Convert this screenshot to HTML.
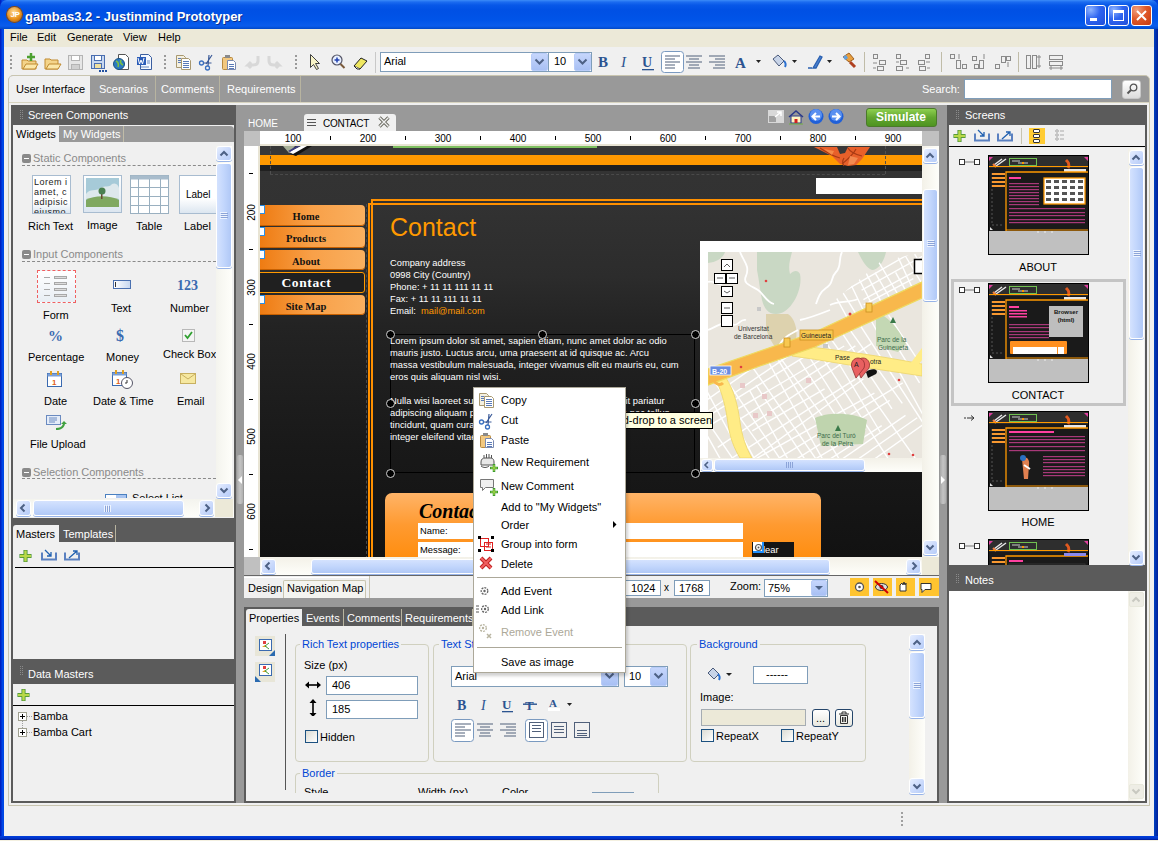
<!DOCTYPE html>
<html><head><meta charset="utf-8">
<style>
*{box-sizing:border-box;margin:0;padding:0}
html,body{width:1158px;height:841px;overflow:hidden;background:#ECE9D8;font-family:"Liberation Sans",sans-serif;font-size:11px;color:#000}
.a{position:absolute}
.t{position:absolute;white-space:nowrap;line-height:13px}
.w{color:#fff}
.mi{left:501px;font-size:11px}
.gb{border:1px solid #D0D0BF;border-radius:4px}
.gt{background:#F0F0F0;color:#0046D5;padding:0 2px}
.inp{background:#fff;border:1px solid #7F9DB9}
.navb{left:258px;width:107px;border-radius:0 4px 4px 0;background:linear-gradient(90deg,#EE7A10,#F8A048 50%,#FAB060);box-shadow:inset 0 -1px 0 #C86000}
.navt{left:260px;width:92px;text-align:center;font-family:"Liberation Serif";font-weight:700;font-size:10.5px;line-height:12px;color:#111}
.evi{left:260px;width:5px;height:9px;background:#fff;border:1px solid #2A90E8;border-left:none}
.yb{width:19px;height:18px;background:#FFC430}
.sbtn{background:linear-gradient(135deg,#E6EEFF 0%,#CCDBFC 50%,#B6CCF8 100%);border:1px solid #fff;border-radius:3px;box-shadow:0 1px 0 #98B4E8}
.sthumb{background:linear-gradient(90deg,#D4E2FE,#C2D6FC 50%,#B0C8F6);border:1px solid #fff;border-radius:3px;box-shadow:0 1px 0 #98B4E8}
.sthumb2{background:linear-gradient(#D4E2FE,#C2D6FC 50%,#B0C8F6);border:1px solid #fff;border-radius:3px;box-shadow:0 1px 0 #98B4E8}
</style></head><body>
<!-- window frame -->
<div class="a" style="left:0;top:0;width:1158px;height:841px;background:linear-gradient(90deg,#0018B8 0px,#0050F0 3px,#0040D8 4px)"></div>
<div class="a" style="left:0;top:0;width:1158px;height:29px;background:linear-gradient(#3C8CF8 0px,#1C6CF0 2px,#0858E8 5px,#0050E4 10px,#0054E8 20px,#0A5CEC 26px,#0048C8 29px);border-radius:7px 7px 0 0"></div>
<div class="a" style="left:1154px;top:29px;width:4px;height:812px;background:linear-gradient(90deg,#0040C0,#001F9A)"></div>
<div class="a" style="left:0;top:836px;width:1158px;height:5px;background:linear-gradient(#0040E0,#0030C0 3px,#001080 4px,#F4F0E0 4px)"></div>
<!-- title -->
<div class="a" style="left:7px;top:7px;width:15px;height:15px;border-radius:50%;background:radial-gradient(circle at 45% 35%,#FFE0A0,#E8901A 55%,#A05000);box-shadow:0 0 0 1px #904A08"></div>
<div class="t" style="left:8px;top:10px;width:14px;text-align:center;font-size:8px;font-weight:700;color:#fff;line-height:9px;letter-spacing:-0.5px">JP</div>
<div class="t w" style="left:25px;top:9px;font-size:13px;font-weight:700;line-height:15px;text-shadow:1px 1px 0 #0A2F8F">gambas3.2 - Justinmind Prototyper</div>
<!-- window buttons -->
<div class="a" style="left:1085px;top:5px;width:21px;height:21px;border:1px solid #fff;border-radius:3px;background:radial-gradient(circle at 25% 20%,#8EB4FF,#2E64F0 45%,#1F4ED8)"></div>
<div class="a" style="left:1090px;top:18px;width:7px;height:3px;background:#fff"></div>
<div class="a" style="left:1108px;top:5px;width:21px;height:21px;border:1px solid #fff;border-radius:3px;background:radial-gradient(circle at 25% 20%,#8EB4FF,#2E64F0 45%,#1F4ED8)"></div>
<div class="a" style="left:1113px;top:10px;width:11px;height:11px;border:1px solid #fff;border-top-width:3px"></div>
<div class="a" style="left:1131px;top:5px;width:21px;height:21px;border:1px solid #fff;border-radius:3px;background:radial-gradient(circle at 25% 20%,#F0A080,#E05A2A 45%,#C83A10)"></div>
<svg class="a" style="left:1136px;top:10px" width="11" height="11"><path d="M1 1L10 10M10 1L1 10" stroke="#fff" stroke-width="2"/></svg>

<!-- menu bar -->
<div class="a" style="left:4px;top:29px;width:1150px;height:18px;background:#ECE9D8"></div>
<div class="t" style="left:10px;top:31px">File</div>
<div class="t" style="left:37px;top:31px">Edit</div>
<div class="t" style="left:67px;top:31px">Generate</div>
<div class="t" style="left:123px;top:31px">View</div>
<div class="t" style="left:158px;top:31px">Help</div>

<!-- toolbar -->
<div class="a" style="left:4px;top:47px;width:1150px;height:759px;background:#F0F0F0"></div>
<svg class="a" style="left:0;top:47px" width="1158" height="28" viewBox="0 47 1158 28">
<g fill="#9A9A9A">
<rect x="10" y="55" width="2" height="2"/><rect x="10" y="59" width="2" height="2"/><rect x="10" y="63" width="2" height="2"/><rect x="10" y="67" width="2" height="2"/>
<rect x="164" y="55" width="2" height="2"/><rect x="164" y="59" width="2" height="2"/><rect x="164" y="63" width="2" height="2"/><rect x="164" y="67" width="2" height="2"/>
<rect x="295" y="55" width="2" height="2"/><rect x="295" y="59" width="2" height="2"/><rect x="295" y="63" width="2" height="2"/><rect x="295" y="67" width="2" height="2"/>
</g>
<!-- new folder -->
<path d="M22 60h5l1 1h8v8h-14z" fill="#F4D48A" stroke="#C08A30"/><path d="M23 69l3-5h12l-3 5z" fill="#FBE7A8" stroke="#C08A30"/>
<path d="M31 53v8M27 57h8" stroke="#4CA030" stroke-width="2.5"/>
<!-- open -->
<path d="M45 59h5l1 1h7v9h-13z" fill="#F4D48A" stroke="#C08A30"/><path d="M46 69l3-5h12l-3 5z" fill="#FBE7A8" stroke="#C08A30"/>
<!-- save disabled -->
<rect x="68.5" y="55.5" width="14" height="14" fill="#E6E6E6" stroke="#B4B4B4"/><rect x="71.5" y="55.5" width="8" height="5" fill="#fff" stroke="#B4B4B4"/><rect x="71.5" y="64.5" width="8" height="5" fill="#D0D0D0" stroke="#B4B4B4"/>
<!-- save as -->
<rect x="91.5" y="55.5" width="13" height="13" fill="#C8D8F0" stroke="#4A6EB0"/><rect x="94.5" y="55.5" width="7" height="5" fill="#fff" stroke="#4A6EB0"/><rect x="94.5" y="63.5" width="7" height="5" fill="#F0E0A0" stroke="#4A6EB0"/>
<rect x="99" y="70" width="2" height="2" fill="#2050A0"/><rect x="102" y="70" width="2" height="2" fill="#2050A0"/><rect x="105" y="70" width="2" height="2" fill="#2050A0"/>
<!-- globe doc -->
<path d="M118.5 54.5h7l3 3v12h-10z" fill="#fff" stroke="#555"/><circle cx="119" cy="64" r="5.5" fill="#2A7AC0" stroke="#184E80"/><path d="M116 61c2 1 3 3 2 6M121 60c-1 2 0 4 2 5" stroke="#7CC040" stroke-width="1.5" fill="none"/>
<!-- word doc -->
<path d="M140.5 54.5h8l3 3v12h-11z" fill="#F4F8FF" stroke="#3A5EA0"/><rect x="137" y="57" width="9" height="8" fill="#2B5CB8"/><path d="M138 58l1.5 6 1.5-4 1.5 4 1.5-6" stroke="#fff" stroke-width="1" fill="none"/><path d="M147 61h3M147 63h3M141 67h8" stroke="#6A8AC0"/>
<!-- copy -->
<path d="M176.5 55.5h7l2 2v10h-9z" fill="#F4F0E0" stroke="#A89870"/><path d="M181.5 58.5h7l2 2v9h-9z" fill="#fff" stroke="#A89870"/><path d="M183 61.5h6M183 63.5h6M183 65.5h6M183 67.5h6M178 58.5h3M178 60.5h3M178 62.5h3" stroke="#5A7AB8"/>
<!-- cut -->
<path d="M212 55l-6 9M209 55l-1 11" stroke="#3A5A98" stroke-width="1.2"/><circle cx="201.5" cy="63" r="2" fill="none" stroke="#3A70C0" stroke-width="1.3"/><circle cx="207.5" cy="68" r="2" fill="none" stroke="#3A70C0" stroke-width="1.3"/><path d="M203.5 63h8" stroke="#3A5A98"/>
<!-- paste -->
<rect x="222.5" y="57.5" width="10" height="12" rx="1" fill="#F2C880" stroke="#B88A40"/><rect x="225" y="55" width="5" height="3" fill="#8A8A8A"/><path d="M227.5 60.5h6l2 2v7h-8z" fill="#fff" stroke="#7A8AB0"/><path d="M229 64.5h5M229 66.5h5M229 68.5h5" stroke="#5A7AB8"/>
<!-- undo redo disabled -->
<path d="M258 56v5c0 3-2 4-5 4h-5l3-3M248 65l3 3" stroke="#D8D8D8" stroke-width="3" fill="none"/>
<path d="M269 56v5c0 3 2 4 5 4h5l-3-3M279 65l-3 3" stroke="#D8D8D8" stroke-width="3" fill="none"/>
<!-- pointer -->
<path d="M310.5 54.5v13l3-3 3 5 2-1-3-5h4z" fill="#F8F4C8" stroke="#404040"/>
<!-- zoom -->
<circle cx="337" cy="60" r="5" fill="#E8F0FF" stroke="#556" stroke-width="1.2"/><path d="M337 57.5v5M334.5 60h5" stroke="#2040B0" stroke-width="1.5"/><path d="M340.5 64l4 4" stroke="#7A5A3A" stroke-width="2"/>
<!-- eraser -->
<path d="M354 66l7-8 6 3-7 8z" fill="#F0E860" stroke="#222"/><path d="M354 66l3 3 3 0" fill="#fff" stroke="#222"/>
<rect x="375" y="52" width="1" height="21" fill="#C8C8C8"/>
<!-- B I U -->
<text x="598" y="67" font-family="Liberation Serif" font-weight="700" font-size="15" fill="#2C5490">B</text>
<text x="621" y="67" font-family="Liberation Serif" font-style="italic" font-size="15" fill="#2C5490">I</text>
<text x="642" y="67" font-family="Liberation Serif" font-weight="700" font-size="14" fill="#2C5490">U</text><rect x="642" y="69" width="12" height="1.3" fill="#2C5490"/>
<rect x="661.5" y="51.5" width="22" height="21" rx="3" fill="#fff" stroke="#7A9AC0"/>
<g stroke="#50607A" stroke-width="1.2">
<path d="M665 56h15M665 59h10M665 62h15M665 65h10M665 68h10"/>
<path d="M686 56h16M689 59h10M686 62h16M689 65h10M688 68h12"/>
<path d="M709 56h16M715 59h10M709 62h16M715 65h10M713 68h12"/>
</g>
<text x="735" y="68" font-family="Liberation Serif" font-weight="700" font-size="15" fill="#2C5490">A</text>
<path d="M756 60h5l-2.5 3z" fill="#222"/>
<!-- bucket -->
<path d="M773 59l5-4 6 6-5 5z" fill="#C8D4E8" stroke="#4A5A7A"/><path d="M784 61c2 2 2 4 1 6" stroke="#2A70D0" stroke-width="2" fill="none"/>
<path d="M792 60h5l-2.5 3z" fill="#222"/>
<!-- pen -->
<path d="M808 68h4M813 68l7-12 2 1-6 11z" stroke="#2A60B0" stroke-width="1.3" fill="#4A80D0"/>
<path d="M827 60h5l-2.5 3z" fill="#222"/>
<!-- brush -->
<path d="M843 57l6-4 5 6-5 3z" fill="#E8A040" stroke="#A06020"/><path d="M843 57l3-2 2 3-3 2z" fill="#60A0E0"/><path d="M850 62l5 5" stroke="#B04020" stroke-width="3"/>
<rect x="864" y="52" width="1" height="20" fill="#C0BCA8"/>
<rect x="941" y="52" width="1" height="20" fill="#C0BCA8"/>
<rect x="1018" y="52" width="1" height="20" fill="#C0BCA8"/>
<g fill="none" stroke="#8A8A8A">
<rect x="873.5" y="54.5" width="4" height="4"/><rect x="879.5" y="60.5" width="6" height="4"/><rect x="877.5" y="66.5" width="6" height="4"/><path d="M873 63h4M873 68h3"/>
<rect x="896.5" y="54.5" width="4" height="4"/><rect x="900.5" y="60.5" width="6" height="4"/><rect x="896.5" y="66.5" width="6" height="4"/><path d="M896 62h3M906 68h3"/>
<rect x="925.5" y="54.5" width="4" height="4"/><rect x="918.5" y="60.5" width="6" height="4"/><rect x="919.5" y="66.5" width="6" height="4"/><path d="M926 62h4M927 68h3"/>
<rect x="950.5" y="54.5" width="4" height="4"/><rect x="956.5" y="60.5" width="4" height="8"/><rect x="962.5" y="64.5" width="4" height="4"/><path d="M959 54v5"/>
<rect x="972.5" y="56.5" width="4" height="4"/><rect x="979.5" y="60.5" width="4" height="8"/><rect x="974.5" y="64.5" width="4" height="4"/><path d="M984 54v5"/>
<rect x="995.5" y="64.5" width="4" height="4"/><rect x="1001.5" y="56.5" width="4" height="6"/><rect x="1006.5" y="56.5" width="4" height="4"/><path d="M1008 62v5"/>
<rect x="1026.5" y="55.5" width="4" height="13"/><rect x="1032.5" y="55.5" width="4" height="13"/><path d="M1039 55v13M1037 57h4M1037 66h4"/>
<rect x="1049.5" y="55.5" width="13" height="4"/><rect x="1049.5" y="61.5" width="13" height="4"/><path d="M1049 68h14M1051 66v4M1061 66v4"/>
</g>
</svg>
<!-- font combo -->
<div class="a" style="left:380px;top:52px;width:169px;height:20px;background:#fff;border:1px solid #7F9DB9"></div>
<div class="t" style="left:384px;top:55px">Arial</div>
<div class="a" style="left:531px;top:53px;width:17px;height:18px;background:linear-gradient(#C6D6FC,#A8C0F4);border:1px solid #B8CCF8;border-radius:2px"></div>
<svg class="a" style="left:534px;top:58px" width="11" height="8"><path d="M1.5 1.5l4 4 4-4" stroke="#4D6185" stroke-width="2" fill="none"/></svg>
<div class="a" style="left:548px;top:52px;width:44px;height:20px;background:#fff;border:1px solid #7F9DB9"></div>
<div class="t" style="left:554px;top:55px">10</div>
<div class="a" style="left:574px;top:53px;width:17px;height:18px;background:linear-gradient(#C6D6FC,#A8C0F4);border:1px solid #B8CCF8;border-radius:2px"></div>
<svg class="a" style="left:577px;top:58px" width="11" height="8"><path d="M1.5 1.5l4 4 4-4" stroke="#4D6185" stroke-width="2" fill="none"/></svg>


<!-- main tab row -->
<div class="a" style="left:8px;top:75px;width:1142px;height:731px;border:1px solid #C9C5B0;border-radius:5px 5px 0 0;background:#999"></div>
<div class="a" style="left:9px;top:76px;width:81px;height:26px;background:#F0F0F0;border-radius:4px 0 0 0"></div>
<div class="t" style="left:16px;top:83px">User Interface</div>
<div class="t w" style="left:99px;top:83px">Scenarios</div>
<div class="a" style="left:155px;top:76px;width:1px;height:26px;background:#B8B4A0"></div>
<div class="t w" style="left:161px;top:83px">Comments</div>
<div class="a" style="left:219px;top:76px;width:1px;height:26px;background:#B8B4A0"></div>
<div class="t w" style="left:227px;top:83px">Requirements</div>
<div class="a" style="left:300px;top:76px;width:1px;height:26px;background:#B8B4A0"></div>
<div class="t w" style="left:922px;top:83px">Search:</div>
<div class="a" style="left:964px;top:79px;width:148px;height:20px;background:#fff;border:1px solid #7F9DB9"></div>
<div class="a" style="left:1122px;top:80px;width:19px;height:19px;background:linear-gradient(#fff,#DCDCDC);border:1px solid #C8C8C8;border-radius:3px"></div>
<svg class="a" style="left:1126px;top:83px" width="12" height="12"><circle cx="7.5" cy="4.5" r="3.3" fill="none" stroke="#555" stroke-width="1.3"/><path d="M5 7L1.5 10.5" stroke="#555" stroke-width="2"/></svg>
<div class="a" style="left:9px;top:102px;width:1140px;height:703px;background:#F0F0F0"></div>
<div class="a" style="left:9px;top:102px;width:1140px;height:1px;background:#D8D4C0"></div><div class="a" style="left:11px;top:105px;width:1136px;height:698px;background:#999"></div>

<!-- LEFT PANEL -->
<div class="a" style="left:11px;top:105px;width:225px;height:698px;background:#5B5B5B"></div>
<div class="a" style="left:13px;top:125px;width:221px;height:393px;background:#F0F0F0"></div>
<svg class="a" style="left:20px;top:110px" width="5" height="11"><g fill="#8A8A8A"><rect x="0" y="0" width="1" height="1"/><rect x="2" y="0" width="1" height="1"/><rect x="0" y="2" width="1" height="1"/><rect x="2" y="2" width="1" height="1"/><rect x="0" y="4" width="1" height="1"/><rect x="2" y="4" width="1" height="1"/><rect x="0" y="6" width="1" height="1"/><rect x="2" y="6" width="1" height="1"/><rect x="0" y="8" width="1" height="1"/><rect x="2" y="8" width="1" height="1"/></g></svg>
<div class="t w" style="left:28px;top:109px">Screen Components</div>
<!-- widgets tabs -->
<div class="a" style="left:13px;top:126px;width:221px;height:16px;background:#999;border-radius:0 4px 0 0"></div>
<div class="a" style="left:13px;top:126px;width:46px;height:17px;background:#F0F0F0"></div>
<div class="t" style="left:16px;top:128px">Widgets</div>
<div class="t w" style="left:63px;top:128px">My Widgets</div>
<div class="a" style="left:123px;top:126px;width:1px;height:16px;background:#C0BCA8"></div>
<!-- static components -->
<div class="a" style="left:22px;top:154px;width:9px;height:9px;background:#8A8A8A;border-radius:2px"></div>
<div class="a" style="left:24px;top:158px;width:5px;height:1px;background:#fff"></div>
<div class="t" style="left:33px;top:152px;color:#8A8A8A">Static Components</div>
<div class="a" style="left:22px;top:165px;width:194px;height:0;border-top:1px dashed #8A8A8A"></div>
<!-- rich text thumb -->
<div class="a" style="left:32px;top:175px;width:39px;height:39px;border:1px solid #A8BCD0;background:linear-gradient(#fff 70%,#DCE6F0);overflow:hidden"></div>
<div class="a" style="left:34px;top:177px;width:36px;height:36px;overflow:hidden;font-size:9px;line-height:10px;letter-spacing:0.5px;color:#222;white-space:nowrap">Lorem i<br>amet, c<br>adipisic<br>eiusmo</div>
<div class="t" style="left:28px;top:220px">Rich Text</div>
<!-- image thumb -->
<div class="a" style="left:83px;top:175px;width:39px;height:38px;border:1px solid #A8BCD0;background:linear-gradient(#fff,#DCE6F0)"></div>
<svg class="a" style="left:86px;top:178px" width="33" height="32"><rect x="0" y="0" width="33" height="29" fill="#A6CAD8"/><path d="M0 16c4-6 10-2 14-6 5-3 9 0 12-4 4-2 7 2 7 4v11H0z" fill="#DDE8EC"/><path d="M0 22c8-5 24-5 33 0v7H0z" fill="#7FA860"/><rect x="15" y="14" width="1.5" height="7" fill="#6A4A30"/><circle cx="16" cy="13" r="3.5" fill="#4A8050"/></svg>
<div class="t" style="left:87px;top:219px">Image</div>
<!-- table thumb -->
<svg class="a" style="left:130px;top:175px" width="40" height="40"><rect x="0.5" y="0.5" width="38" height="38" fill="#fff" stroke="#9AB0C0"/><rect x="0.5" y="0.5" width="38" height="4" fill="#A8BCCC"/><g stroke="#9AB0C0"><path d="M8.5 4v35M19.5 4v35M30.5 4v35M0 12.5h39M0 21.5h39M0 30.5h39"/></g></svg>
<div class="t" style="left:136px;top:220px">Table</div>
<!-- label thumb -->
<div class="a" style="left:179px;top:175px;width:37px;height:39px;border:1px solid #A8BCD0;border-right:none;background:linear-gradient(#fff 60%,#DCE6F0)"></div>
<div class="t" style="left:186px;top:188px;font-size:10px">Label</div>
<div class="t" style="left:184px;top:220px">Label</div>
<!-- input components -->
<div class="a" style="left:22px;top:250px;width:9px;height:9px;background:#8A8A8A;border-radius:2px"></div>
<div class="a" style="left:24px;top:254px;width:5px;height:1px;background:#fff"></div>
<div class="t" style="left:33px;top:248px;color:#8A8A8A">Input Components</div>
<div class="a" style="left:22px;top:261px;width:194px;height:0;border-top:1px dashed #8A8A8A"></div>
<!-- form -->
<div class="a" style="left:37px;top:270px;width:39px;height:33px;border:1px dashed #F06060;background:linear-gradient(#fff,#E8EEF4)"></div>
<svg class="a" style="left:42px;top:275px" width="30" height="24"><g stroke="#A8A8A8"><path d="M2 2.5h6M2 8.5h6M2 14.5h6M2 20.5h6"/><rect x="12.5" y="1.5" width="12" height="2" fill="#DDD"/><rect x="12.5" y="7.5" width="12" height="2" fill="#DDD"/><rect x="12.5" y="13.5" width="12" height="2" fill="#DDD"/><rect x="12.5" y="19.5" width="12" height="2" fill="#DDD"/></g></svg>
<div class="t" style="left:43px;top:309px">Form</div>
<!-- text -->
<div class="a" style="left:113px;top:280px;width:18px;height:9px;border:1px solid #4A70B0;background:linear-gradient(90deg,#fff,#C8D8F0)"></div>
<div class="a" style="left:115px;top:282px;width:1px;height:5px;background:#333"></div>
<div class="t" style="left:111px;top:302px">Text</div>
<!-- number -->
<div class="t" style="left:177px;top:279px;font-family:'Liberation Serif';font-weight:700;font-size:14px;color:#3A6AB0;letter-spacing:0px">123</div>
<div class="t" style="left:170px;top:302px">Number</div>
<!-- percentage -->
<div class="t" style="left:48px;top:330px;font-family:'Liberation Serif';font-weight:700;font-size:15px;color:#3A6AB0">%</div>
<div class="t" style="left:28px;top:351px">Percentage</div>
<div class="t" style="left:116px;top:329px;font-family:'Liberation Serif';font-weight:700;font-size:16px;color:#3A6AB0">$</div>
<div class="t" style="left:106px;top:351px">Money</div>
<svg class="a" style="left:182px;top:329px" width="14" height="14"><rect x="0.5" y="0.5" width="12" height="12" fill="#F4F4F4" stroke="#B8B8B8"/><path d="M3 6l2.5 3 4.5-6" stroke="#30A030" stroke-width="1.8" fill="none"/></svg>
<div class="t" style="left:163px;top:348px">Check Box</div>
<!-- date -->
<svg class="a" style="left:47px;top:371px" width="16" height="17"><rect x="0.5" y="2.5" width="14" height="13" fill="#fff" stroke="#3A6AB0"/><rect x="0.5" y="2.5" width="14" height="3" fill="#7AA0D8"/><rect x="3" y="0" width="2" height="4" fill="#E0A020"/><rect x="10" y="0" width="2" height="4" fill="#E0A020"/><text x="5" y="14" font-size="8" font-weight="700" fill="#E06020" font-family="Liberation Sans">1</text></svg>
<div class="t" style="left:44px;top:395px">Date</div>
<svg class="a" style="left:112px;top:370px" width="22" height="20"><rect x="0.5" y="2.5" width="14" height="13" fill="#fff" stroke="#3A6AB0"/><rect x="0.5" y="2.5" width="14" height="3" fill="#7AA0D8"/><rect x="3" y="0" width="2" height="4" fill="#E0A020"/><rect x="10" y="0" width="2" height="4" fill="#E0A020"/><text x="4" y="14" font-size="8" font-weight="700" fill="#E06020" font-family="Liberation Sans">1</text><circle cx="15" cy="13" r="5.5" fill="#fff" stroke="#556"/><path d="M15 10v3h-2" stroke="#333" fill="none"/></svg>
<div class="t" style="left:93px;top:395px">Date &amp; Time</div>
<svg class="a" style="left:180px;top:373px" width="17" height="12"><rect x="0.5" y="0.5" width="15" height="10" fill="#F6E8A0" stroke="#C8B060"/><path d="M1 1l7 5 7-5" stroke="#C8B060" fill="none"/></svg>
<div class="t" style="left:177px;top:395px">Email</div>
<!-- file upload -->
<svg class="a" style="left:46px;top:415px" width="22" height="16"><rect x="0.5" y="0.5" width="14" height="9" fill="#E4ECF8" stroke="#6A8AC0"/><path d="M3 3h8M3 5h8M3 7h6" stroke="#6A8AC0"/><path d="M10 13c3 0 6-1 7-4l-2 0 3-3 3 3h-2c-1 4-4 6-9 6z" fill="#40A040"/></svg>
<div class="t" style="left:30px;top:438px">File Upload</div>
<!-- selection components -->
<div class="a" style="left:22px;top:468px;width:9px;height:9px;background:#8A8A8A;border-radius:2px"></div>
<div class="a" style="left:24px;top:472px;width:5px;height:1px;background:#fff"></div>
<div class="t" style="left:33px;top:466px;color:#8A8A8A">Selection Components</div>
<div class="a" style="left:22px;top:478px;width:194px;height:0;border-top:1px dashed #8A8A8A"></div>
<div class="a" style="left:105px;top:494px;width:22px;height:6px;border:1px solid #4A80C0;border-bottom:none;background:linear-gradient(90deg,#fff 50%,#A8C4F0 50%)"></div>
<div class="t" style="left:132px;top:492px;height:6px;overflow:hidden;line-height:13px">Select List</div>
<div class="a" style="left:13px;top:498px;width:203px;height:20px;background:#F0F0F0"></div>
<!-- vertical scrollbar -->
<div class="a" style="left:216px;top:146px;width:16px;height:352px;background:linear-gradient(90deg,#F4F4EE,#FEFEFA)"></div>
<div class="a sbtn" style="left:216px;top:146px;width:16px;height:15px"></div>
<svg class="a" style="left:219px;top:150px" width="10" height="7"><path d="M1.5 5.5l3.5-3.5 3.5 3.5" stroke="#4D6185" stroke-width="2" fill="none"/></svg>
<div class="a sthumb" style="left:216px;top:163px;width:16px;height:105px"></div>
<svg class="a" style="left:220px;top:212px" width="8" height="7"><path d="M0 .5h7M0 2.5h7M0 4.5h7M0 6.5h7" stroke="#EEF4FE"/><path d="M1 1.5h7M1 3.5h7M1 5.5h7" stroke="#8CA4D8"/></svg>
<div class="a sbtn" style="left:216px;top:483px;width:16px;height:15px"></div>
<svg class="a" style="left:219px;top:487px" width="10" height="7"><path d="M1.5 1.5l3.5 3.5 3.5-3.5" stroke="#4D6185" stroke-width="2" fill="none"/></svg>
<!-- horizontal scrollbar -->
<div class="a" style="left:13px;top:499px;width:221px;height:18px;background:linear-gradient(#F4F4EE,#FEFEFA)"></div>
<div class="a sbtn" style="left:16px;top:500px;width:15px;height:16px"></div>
<svg class="a" style="left:19px;top:503px" width="8" height="10"><path d="M5.5 1.5l-3.5 3.5 3.5 3.5" stroke="#4D6185" stroke-width="2" fill="none"/></svg>
<div class="a sthumb2" style="left:33px;top:500px;width:151px;height:16px"></div>
<svg class="a" style="left:104px;top:505px" width="8" height="7"><path d="M.5 0v7M2.5 0v7M4.5 0v7M6.5 0v7" stroke="#EEF4FE"/><path d="M1.5 1v7M3.5 1v7M5.5 1v7" stroke="#8CA4D8"/></svg>
<div class="a" style="left:215px;top:499px;width:18px;height:18px;background:#ECE9D8"></div>
<div class="a sbtn" style="left:199px;top:500px;width:15px;height:16px"></div>
<svg class="a" style="left:203px;top:503px" width="8" height="10"><path d="M2.5 1.5l3.5 3.5-3.5 3.5" stroke="#4D6185" stroke-width="2" fill="none"/></svg>
<!-- masters -->
<div class="a" style="left:13px;top:525px;width:46px;height:18px;background:#F0F0F0;border-radius:3px 0 0 0"></div>
<div class="t" style="left:16px;top:528px">Masters</div>
<div class="t w" style="left:63px;top:528px">Templates</div>
<div class="a" style="left:115px;top:525px;width:1px;height:17px;background:#B8B4A0"></div>
<div class="a" style="left:13px;top:542px;width:221px;height:117px;background:#F0F0F0"></div>
<svg class="a" style="left:19px;top:549px" width="62" height="15">
<path d="M6.5 1v12M0.5 7h12" stroke="#3A8A30" stroke-width="4"/><path d="M6.5 1.5v11M1 7h11" stroke="#B8D848" stroke-width="2.5"/>
<path d="M23 3.5v7h14v-7" stroke="#5A80C0" stroke-width="2" fill="none"/><path d="M26 1l6 6M32 3v4h-4" stroke="#2060B0" stroke-width="1.3" fill="none"/>
<path d="M46 3.5v7h14v-7" stroke="#5A80C0" stroke-width="2" fill="none"/><path d="M50 9l8-7M54 2h4v4" stroke="#2060B0" stroke-width="1.3" fill="none"/>
</svg>
<div class="a" style="left:15px;top:567px;width:219px;height:1px;background:#000"></div>
<!-- data masters -->
<svg class="a" style="left:20px;top:666px" width="5" height="11"><g fill="#8A8A8A"><rect x="0" y="0" width="1" height="1"/><rect x="2" y="0" width="1" height="1"/><rect x="0" y="2" width="1" height="1"/><rect x="2" y="2" width="1" height="1"/><rect x="0" y="4" width="1" height="1"/><rect x="2" y="4" width="1" height="1"/><rect x="0" y="6" width="1" height="1"/><rect x="2" y="6" width="1" height="1"/><rect x="0" y="8" width="1" height="1"/><rect x="2" y="8" width="1" height="1"/></g></svg>
<div class="t w" style="left:28px;top:668px">Data Masters</div>
<div class="a" style="left:13px;top:684px;width:221px;height:117px;background:#F0F0F0"></div>
<svg class="a" style="left:17px;top:688px" width="14" height="14"><path d="M6.5 1v12M0.5 7h12" stroke="#3A8A30" stroke-width="4"/><path d="M6.5 1.5v11M1 7h11" stroke="#B8D848" stroke-width="2.5"/></svg>
<div class="a" style="left:13px;top:705px;width:221px;height:1px;background:#000"></div>
<svg class="a" style="left:18px;top:712px" width="16" height="28"><rect x="0.5" y="0.5" width="8" height="8" fill="#fff" stroke="#A0A090"/><path d="M2 4.5h5M4.5 2v5" stroke="#000"/><rect x="0.5" y="16.5" width="8" height="8" fill="#fff" stroke="#A0A090"/><path d="M2 20.5h5M4.5 18v5" stroke="#000"/><path d="M9 4.5h6M9 20.5h6M4.5 9v7" stroke="#A0A0A0" stroke-dasharray="1 1"/></svg>
<div class="t" style="left:33px;top:710px">Bamba</div>
<div class="t" style="left:33px;top:726px">Bamba Cart</div>

<!-- CENTER -->
<div class="t w" style="left:248px;top:117px;font-size:10px">HOME</div>
<div class="a" style="left:304px;top:114px;width:92px;height:18px;background:#F0F0F0;border-radius:3px 3px 0 0"></div>
<svg class="a" style="left:307px;top:119px" width="10" height="7"><path d="M0 .5h9M0 3.5h9M0 6.5h9" stroke="#555"/></svg>
<div class="t" style="left:323px;top:117px;font-size:10px;letter-spacing:-0.2px">CONTACT</div>
<svg class="a" style="left:378px;top:116px" width="12" height="12"><path d="M1.5 1.5l9 9M10.5 1.5l-9 9" stroke="#6A6A60" stroke-width="3.2"/><path d="M1.5 1.5l9 9M10.5 1.5l-9 9" stroke="#F0F0F0" stroke-width="1.4"/></svg>
<!-- canvas icons -->
<svg class="a" style="left:766px;top:107px" width="80" height="20">
<rect x="2" y="3" width="16" height="13" fill="#D8D8D8"/><rect x="3" y="9" width="7" height="6" fill="#A0A0A0"/><path d="M9 10l6-5M11 5h4v4" stroke="#fff" stroke-width="1.5" fill="none"/>
<path d="M23 10l7-6 7 6" fill="none" stroke="#2A3A8A" stroke-width="1.5"/><rect x="25" y="9" width="10" height="7" fill="#FFF4C0" stroke="#2A3A8A"/><rect x="28.5" y="12" width="3" height="4" fill="#D02020"/><path d="M23 17h14" stroke="#70B040"/>
<circle cx="50" cy="9.5" r="7.5" fill="#2060D8"/><circle cx="50" cy="8" r="6" fill="#5A90F0"/><path d="M54 9.5h-7M50 6l-3.5 3.5 3.5 3.5" stroke="#fff" stroke-width="2" fill="none"/>
<circle cx="70" cy="9.5" r="7.5" fill="#2060D8"/><circle cx="70" cy="8" r="6" fill="#5A90F0"/><path d="M66 9.5h7M70 6l3.5 3.5-3.5 3.5" stroke="#fff" stroke-width="2" fill="none"/>
</svg>
<div class="a" style="left:866px;top:108px;width:71px;height:19px;border-radius:3px;background:linear-gradient(#8ED050,#62A630 50%,#4E9420);border:1px solid #4A7A2A"></div>
<div class="t w" style="left:876px;top:110px;font-size:12px;font-weight:700;line-height:14px">Simulate</div>
<!-- rulers -->
<div class="a" style="left:244px;top:131px;width:16px;height:15px;background:#C0C0C0"></div>
<div class="a" style="left:260px;top:131px;width:662px;height:15px;background:#fff;border-bottom:2px solid #E8E4D4"></div>
<div class="a" style="left:922px;top:131px;width:17px;height:15px;background:#C0C0C0"></div>
<div class="a" style="left:244px;top:146px;width:16px;height:411px;background:#fff;border-right:2px solid #E8E4D4"></div>
<div class="t" style="left:273px;top:132px;width:40px;text-align:center;font-size:10px">100</div>
<div class="a" style="left:330px;top:136px;width:1px;height:4px;background:#000"></div>
<div class="t" style="left:348px;top:132px;width:40px;text-align:center;font-size:10px">200</div>
<div class="a" style="left:405px;top:136px;width:1px;height:4px;background:#000"></div>
<div class="t" style="left:423px;top:132px;width:40px;text-align:center;font-size:10px">300</div>
<div class="a" style="left:480px;top:136px;width:1px;height:4px;background:#000"></div>
<div class="t" style="left:498px;top:132px;width:40px;text-align:center;font-size:10px">400</div>
<div class="a" style="left:555px;top:136px;width:1px;height:4px;background:#000"></div>
<div class="t" style="left:573px;top:132px;width:40px;text-align:center;font-size:10px">500</div>
<div class="a" style="left:630px;top:136px;width:1px;height:4px;background:#000"></div>
<div class="t" style="left:648px;top:132px;width:40px;text-align:center;font-size:10px">600</div>
<div class="a" style="left:705px;top:136px;width:1px;height:4px;background:#000"></div>
<div class="t" style="left:723px;top:132px;width:40px;text-align:center;font-size:10px">700</div>
<div class="a" style="left:780px;top:136px;width:1px;height:4px;background:#000"></div>
<div class="t" style="left:798px;top:132px;width:40px;text-align:center;font-size:10px">800</div>
<div class="a" style="left:855px;top:136px;width:1px;height:4px;background:#000"></div>
<div class="t" style="left:873px;top:132px;width:40px;text-align:center;font-size:10px">900</div>

<div class="a" style="left:249px;top:173px;width:4px;height:1px;background:#000"></div>
<div class="a" style="left:249px;top:249px;width:4px;height:1px;background:#000"></div>
<div class="a" style="left:249px;top:324px;width:4px;height:1px;background:#000"></div>
<div class="a" style="left:249px;top:399px;width:4px;height:1px;background:#000"></div>
<div class="a" style="left:249px;top:474px;width:4px;height:1px;background:#000"></div>
<div class="a" style="left:249px;top:549px;width:4px;height:1px;background:#000"></div>
<div class="t" style="left:231px;top:206px;width:40px;text-align:center;font-size:10px;transform:rotate(-90deg)">200</div>
<div class="t" style="left:231px;top:281px;width:40px;text-align:center;font-size:10px;transform:rotate(-90deg)">300</div>
<div class="t" style="left:231px;top:355px;width:40px;text-align:center;font-size:10px;transform:rotate(-90deg)">400</div>
<div class="t" style="left:231px;top:430px;width:40px;text-align:center;font-size:10px;transform:rotate(-90deg)">500</div>
<div class="t" style="left:231px;top:505px;width:40px;text-align:center;font-size:10px;transform:rotate(-90deg)">600</div>

<!-- CANVAS -->
<div class="a" style="left:260px;top:146px;width:662px;height:411px;overflow:hidden">
<div class="a" style="left:-260px;top:-146px;width:1158px;height:841px">
<div class="a" style="left:260px;top:146px;width:662px;height:411px;background:linear-gradient(#343434 0px,#323232 60px,#2C2C2C 130px,#232323 180px,#191919 300px,#121212 411px)"></div>
<div class="a" style="left:260px;top:146px;width:662px;height:9px;background:#383838"></div>
<div class="a" style="left:393px;top:146px;width:204px;height:2px;background:#7EC060"></div>
<div class="a" style="left:260px;top:155px;width:662px;height:10px;background:#FF9900"></div>
<div class="a" style="left:260px;top:165px;width:662px;height:6px;background:#202020"></div>
<div class="a" style="left:270px;top:174px;width:615px;height:0;border-top:1px dashed #4A4A4A"></div>
<div class="a" style="left:270px;top:146px;width:0;height:28px;border-left:1px dashed #505050"></div>
<div class="a" style="left:885px;top:146px;width:0;height:28px;border-left:1px dashed #505050"></div>
<svg class="a" style="left:280px;top:146px" width="36" height="14"><path d="M3 0h12l-6 7z" fill="#A8B098"/><path d="M10 8l14-8h8l-16 10z" fill="#111"/><path d="M9 6l12-6h6l-14 8z" fill="#fff"/><path d="M8 5l9-5h3l-10 6z" fill="#3A3A80"/></svg>
<svg class="a" style="left:812px;top:146px" width="60" height="21"><path d="M2 1h56l-8 12-6 6-8 1-8-2-8-8z" fill="#E8602A"/><path d="M25 1h11l-3 6-5 1z" fill="#383838"/><path d="M8 2c6 4 12 8 20 10M44 3c-3 6-8 10-14 15M36 2c2 4 6 6 14 8M32 12c-2 3-2 5 0 8" stroke="#A83A14" stroke-width="1.2" fill="none"/><path d="M38 10l8 2-4 6-6 1z" fill="#F38A50"/><path d="M12 3l10 2-2 4z" fill="#F58A48"/></svg>
<div class="a" style="left:816px;top:178px;width:120px;height:16px;background:#fff"></div>
<!-- nav buttons -->
<div class="a navb" style="left:258px;top:205px;height:21px"></div>
<div class="a navb" style="left:258px;top:227px;height:21px"></div>
<div class="a navb" style="left:258px;top:250px;height:20px"></div>
<div class="a" style="left:256px;top:272px;width:109px;height:21px;background:#202020;border:1px solid #FF9900;border-radius:3px"></div>
<div class="a navb" style="left:258px;top:295px;height:20px"></div>
<div class="t navt" style="top:211px">Home</div>
<div class="t navt" style="top:233px">Products</div>
<div class="t navt" style="top:256px">About</div>
<div class="t" style="left:260px;top:275px;width:93px;text-align:center;font-family:'Liberation Serif';font-weight:700;font-size:13.5px;line-height:15px;letter-spacing:0.6px;color:#fff">Contact</div>
<div class="t navt" style="top:301px">Site Map</div>
<div class="a evi" style="top:205px"></div><div class="a evi" style="top:227px"></div><div class="a evi" style="top:250px"></div><div class="a evi" style="top:295px"></div>
<div class="a" style="left:366px;top:204px;width:0;height:360px;border-left:1px dashed #4A4A4A"></div>
<!-- content frame -->
<div class="a" style="left:371px;top:199px;width:600px;height:400px;border:2px solid #FF9000;border-right:none;border-bottom:none"></div>
<div class="a" style="left:368px;top:203px;width:600px;height:400px;border:2px solid #FF9000;border-right:none;border-bottom:none"></div>
<div class="t" style="left:390px;top:213px;font-size:25px;line-height:28px;color:#FF9900">Contact</div>
<div class="a" style="left:390px;top:257px;font-size:9.3px;line-height:12px;color:#fff;white-space:nowrap">Company address<br>0998 City (Country)<br>Phone: + 11 11 111 11 11<br>Fax: + 11 11 111 11 11<br>Email: &nbsp;<span style="color:#FF9900">mail@mail.com</span></div>
<!-- lorem -->
<div class="a" style="left:390px;top:334px;width:305px;height:139px;border:1px solid #000;border-top-color:#000"></div>
<div class="a" style="left:390px;top:335px;font-size:9.4px;line-height:12px;color:#fff;white-space:nowrap">Lorem ipsum dolor sit amet, sapien etiam, nunc amet dolor ac odio<br>mauris justo. Luctus arcu, uma praesent at id quisque ac. Arcu<br>massa vestibulum malesuada, integer vivamus elit eu mauris eu, cum<br>eros quis aliquam nisl wisi.<br><br>Nulla wisi laoreet suspendisse vivamus elit eu mauris velit pariatur<br>adipiscing aliquam pede, nunc amet dolor ac odio magna nec tellus<br>tincidunt, quam curabitur, velit et nunc, amet dolor<br>integer eleifend vitae, magna arcu</div>
<!-- map -->
<div class="a" style="left:700px;top:241px;width:230px;height:231px;background:#fff"></div>
<svg class="a" style="left:708px;top:252px" width="214" height="206" viewBox="708 252 214 206">
<defs><clipPath id="cl1"><path d="M708 382L760 364L815 345L922 296V458H708z"/></clipPath><clipPath id="cl2"><path d="M835 300L880 262L922 252V290L840 322z"/></clipPath></defs>
<rect x="708" y="252" width="214" height="206" fill="#EAE6DE"/>
<path d="M708 252h17c-2 6-8 10-17 11z" fill="#C9D8C4"/>
<path d="M757 252h35c-2 8-4 14-2 22 4-4 8-4 10 0 2 10-2 22-8 30-4 6-10 10-16 10-8 0-12-6-14-14-2-10-3-20-5-30z" fill="#C9D8C4"/>
<path d="M858 252h28c-2 10-8 18-14 18-6-2-10-10-14-18z" fill="#C9D8C4"/>
<path d="M766 314h22c6 4 10 14 8 26l-18 10c-6-6-10-14-12-22z" fill="#DDD2AE"/>
<g stroke="#fff" stroke-width="1.4" fill="none" clip-path="url(#cl1)"><path d="M672.9 355.9L762.6 296.7"/><path d="M634.6 388.6L799.4 286.7"/><path d="M644.7 402.5L772.9 310.4"/><path d="M650.5 403.6L789.0 315.0"/><path d="M686.5 389.3L807.2 316.8"/><path d="M708.9 380.4L804.3 329.3"/><path d="M678.8 419.4L841.8 305.9"/><path d="M706.9 412.0L816.9 336.3"/><path d="M667.5 441.0L810.8 352.8"/><path d="M690.2 436.9L844.2 346.0"/><path d="M730.4 425.1L855.4 345.9"/><path d="M717.7 447.4L871.3 343.6"/><path d="M752.3 430.8L824.6 388.8"/><path d="M700.1 478.5L855.3 379.1"/><path d="M749.7 460.6L863.4 379.0"/><path d="M745.4 464.6L874.4 393.1"/><path d="M762.0 468.5L902.7 382.8"/><path d="M712.1 512.2L889.7 400.4"/><path d="M770.9 485.5L866.1 428.7"/><path d="M719.7 530.4L881.7 425.6"/><path d="M728.1 537.9L905.5 415.3"/><path d="M756.3 530.4L917.2 417.8"/><path d="M772.6 531.3L922.7 424.8"/><path d="M754.1 544.7L900.0 462.4"/><path d="M810.0 526.6L883.8 478.3"/><path d="M764.2 567.9L910.0 467.3"/><path d="M749.4 580.8L912.5 481.6"/><path d="M888.6 315.2L955.5 418.1"/><path d="M869.4 302.1L919.6 382.9"/><path d="M870.5 319.5L936.6 439.6"/><path d="M828.2 275.8L927.9 430.3"/><path d="M821.4 289.9L902.3 403.4"/><path d="M807.1 279.7L892.0 408.9"/><path d="M795.9 289.1L916.0 459.4"/><path d="M803.5 304.8L881.1 433.5"/><path d="M817.5 350.2L901.6 479.3"/><path d="M777.2 306.1L854.3 428.0"/><path d="M799.2 359.8L849.4 436.4"/><path d="M773.7 348.6L840.2 440.7"/><path d="M771.8 349.6L865.0 500.9"/><path d="M754.3 336.5L827.8 468.5"/><path d="M750.1 363.7L842.2 496.9"/><path d="M756.1 385.2L842.1 515.8"/><path d="M749.4 390.1L816.1 509.6"/><path d="M718.1 367.6L784.3 465.1"/><path d="M704.0 367.8L807.1 510.9"/><path d="M729.8 413.1L799.5 542.4"/><path d="M695.3 369.7L763.4 496.0"/><path d="M696.4 405.5L789.2 541.0"/><path d="M693.0 410.3L768.5 544.9"/><path d="M690.2 435.4L767.2 544.0"/><path d="M657.1 389.6L752.1 554.2"/><path d="M676.6 449.4L730.8 531.8"/><path d="M657.8 438.7L712.1 523.0"/><path d="M657.5 455.3L735.2 566.3"/><path d="M650.7 466.4L718.2 563.3"/></g>
<g stroke="#fff" stroke-width="1.4" fill="none" clip-path="url(#cl2)"><path d="M829.1 262.8L882.3 233.1"/><path d="M843.9 261.0L916.2 228.4"/><path d="M858.2 265.7L896.4 245.0"/><path d="M843.7 282.0L910.5 243.4"/><path d="M844.3 291.2L924.2 245.2"/><path d="M861.6 290.2L928.2 253.0"/><path d="M863.4 299.6L921.3 267.9"/><path d="M863.7 304.9L913.3 278.7"/><path d="M861.9 321.1L926.0 281.1"/><path d="M868.0 321.3L932.3 289.6"/><path d="M865.6 333.4L937.4 295.9"/><path d="M889.8 329.2L938.1 301.3"/><path d="M898.1 334.3L941.2 311.9"/><path d="M889.0 347.0L952.5 314.5"/><path d="M892.1 355.3L963.5 316.7"/><path d="M942.1 245.7L960.3 282.5"/><path d="M932.0 247.0L950.7 282.8"/><path d="M910.4 228.1L947.0 288.9"/><path d="M914.6 254.1L950.5 312.9"/><path d="M904.5 254.5L928.5 294.8"/><path d="M891.8 243.8L930.0 326.0"/><path d="M895.6 272.3L924.3 324.4"/><path d="M878.9 262.4L908.9 313.0"/><path d="M875.0 272.7L895.5 307.5"/><path d="M856.4 254.6L891.6 321.9"/><path d="M849.4 260.2L893.6 346.8"/><path d="M841.9 265.8L872.5 329.5"/><path d="M833.2 277.0L864.8 328.1"/><path d="M836.0 297.2L857.8 337.0"/><path d="M822.9 294.4L858.5 354.1"/></g>
<g stroke="#fff" stroke-width="1.8" fill="none">
<path d="M708 282c6-2 10 4 14 2M740 252c4 10 10 14 6 24-4 8 6 10 12 14 6 4 8 12 16 14M708 330c10-4 16-10 24-6 6 4 8-6 14-4"/>
<path d="M842 252c-4 8 0 14-6 20-6 6-2 12-10 16-6 4-8 10-10 16M830 305c8-4 18-2 28-6M800 320c10-2 20-6 30-10M778 348c4-10 12-14 20-18"/>
</g>
<path d="M876 312c12 4 22 16 30 32l-8 8-22-6z" fill="#C4D8B4"/>
<path d="M815 418c12-6 38-6 52 2l-4 24-42 2z" fill="#BFD4AE"/>
<path d="M716 380c6 12 10 28 12 44 2 14 6 24 12 34h12c-6-10-10-22-12-36-2-16-6-32-14-44z" fill="#FFEC86" stroke="#EED66A" stroke-width="0.8"/>
<path d="M800 346c40 4 80 10 122 18v12l-40-6c-30-4-60-10-90-14z" fill="#FFEC86" stroke="#EED66A" stroke-width="0.8"/>
<path d="M910 364l12-16v12l-6 8z" fill="#FFEC86"/>
<path d="M708 369L760 351L815 332L922 282V298L815 347L760 366L708 385z" fill="#F8B84C" stroke="#EEDA60" stroke-width="1.2"/>
<path d="M722 370c-6 0-9 4-8 10 1 4 6 6 9 3" stroke="#F8B84C" stroke-width="3" fill="none"/>
<rect x="710" y="366" width="21" height="9" fill="#6A8CE0" stroke="#fff" stroke-width="0.8"/><text x="712" y="373.5" font-size="7" font-weight="700" fill="#fff" font-family="Liberation Sans">B-20</text>
<rect x="800" y="330" width="33" height="10" fill="#F8C850" stroke="#C89020" stroke-width="0.8"/><text x="801" y="338" font-size="6.5" fill="#222" font-family="Liberation Sans">Guineueta</text>
<rect x="784" y="338" width="6" height="9" fill="#F8C850" stroke="#C89020" stroke-width="0.8"/>
<rect x="866" y="303" width="6" height="9" fill="#F8C850" stroke="#C89020" stroke-width="0.8"/>
<rect x="757" y="307" width="4" height="4" fill="#C8C8C8"/><rect x="823" y="344" width="5" height="4" fill="#C8C8C8"/>
<text x="738" y="331" font-size="6.5" fill="#333" font-family="Liberation Sans">Universitat</text>
<text x="734" y="339" font-size="6.5" fill="#333" font-family="Liberation Sans">de Barcelona</text>
<text x="877" y="342" font-size="6.5" fill="#3A6A4A" font-family="Liberation Sans">Parc de la</text>
<text x="878" y="350" font-size="6.5" fill="#3A6A4A" font-family="Liberation Sans">Guineueta</text>
<text x="835" y="360" font-size="6.5" fill="#222" font-family="Liberation Sans">Pase</text>
<text x="870" y="364" font-size="6.5" fill="#222" font-family="Liberation Sans">otra</text>
<text x="817" y="438" font-size="6.5" fill="#3A6A4A" font-family="Liberation Sans">Parc del Turó</text>
<text x="822" y="446" font-size="6.5" fill="#3A6A4A" font-family="Liberation Sans">de la Peira</text>
<path d="M893 317l-3 6h6z" fill="#3A7A4A"/><path d="M838 425l-3 6h6z" fill="#3A7A4A"/>
<g fill="#E8C8C8"><rect x="740" y="383" width="5" height="5"/><rect x="762" y="394" width="5" height="5"/><rect x="767" y="411" width="5" height="5"/><rect x="753" y="413" width="5" height="5"/><rect x="806" y="378" width="5" height="5"/></g>
<path d="M866 372c4-4 14-4 10 2l-8 4z" fill="#111"/>
<path d="M861 378l-4-10c-2-6 2-10 6-10s8 4 6 10z" fill="#E86060" stroke="#903030" stroke-width="0.8"/>
<path d="M856 378l-4-10c-2-6 2-10 6-10s8 4 6 10z" fill="#E86060" stroke="#903030" stroke-width="0.8"/>
<text x="854" y="367" font-size="7" fill="#222" font-family="Liberation Sans">A</text>
<g fill="#E04040"><circle cx="766" cy="281" r="1.3"/><circle cx="850" cy="314" r="1.5"/><circle cx="741" cy="367" r="1.3"/><circle cx="899" cy="380" r="1.3"/><circle cx="889" cy="454" r="1.3"/><circle cx="913" cy="455" r="1.3"/></g>
<g fill="none" stroke="#000" stroke-width="1"><rect x="721.5" y="259.5" width="11" height="11" fill="#fff"/><rect x="714.5" y="273.5" width="11" height="10" fill="#fff"/><rect x="726.5" y="273.5" width="11" height="10" fill="#fff"/><rect x="721.5" y="286.5" width="11" height="10" fill="#fff"/><rect x="721.5" y="302.5" width="11" height="11" fill="#fff"/><rect x="721.5" y="315.5" width="11" height="11" fill="#fff"/></g>
<path d="M724 267l3-3 3 3M717 278h6M729 278h6M724 291l3 2 3-2M724 308h6" stroke="#333" stroke-width="0.8" fill="none"/>
<rect x="914.5" y="259.5" width="10" height="14" fill="#fff" stroke="#000" stroke-width="1.5"/>
</svg>
<div class="a" style="left:700px;top:458px;width:222px;height:14px;background:linear-gradient(#F3F1E8,#FEFEFA)"></div>
<div class="a sbtn" style="left:701px;top:459px;width:12px;height:12px"></div>
<svg class="a" style="left:703px;top:461px" width="8" height="8"><path d="M5 1L2 4l3 3" stroke="#4D6185" stroke-width="1.6" fill="none"/></svg>
<div class="a sthumb2" style="left:714px;top:459px;width:151px;height:12px"></div>
<svg class="a" style="left:786px;top:462px" width="8" height="6"><path d="M.5 0v6M2.5 0v6M4.5 0v6M6.5 0v6" stroke="#8CA4D8"/></svg>

<!-- contact form -->
<div class="a" style="left:385px;top:493px;width:436px;height:80px;border-radius:7px 7px 0 0;background:linear-gradient(#FFB468,#FF9A30 40%,#FF8800)"></div>
<div class="t" style="left:419px;top:500px;font-family:'Liberation Serif';font-style:italic;font-weight:700;font-size:20px;line-height:22px;color:#000">Contact</div>
<div class="a" style="left:418px;top:523px;width:325px;height:16px;background:#fff"></div>
<div class="t" style="left:420px;top:525px;font-size:9.4px;line-height:12px">Name:</div>
<div class="a" style="left:418px;top:542px;width:325px;height:20px;background:#fff"></div>
<div class="t" style="left:420px;top:544px;font-size:9.4px;line-height:12px">Message:</div>
<div class="a" style="left:752px;top:542px;width:42px;height:20px;background:#151515"></div>
<div class="t" style="left:763px;top:544px;font-size:9.4px;line-height:12px;color:#fff">lear</div>
<div class="a" style="left:753px;top:542px;width:11px;height:11px;background:#fff;border:2px solid #1E90FF;border-top:none;border-left:none"></div>
<svg class="a" style="left:754px;top:543px" width="9" height="9"><circle cx="4.5" cy="4.5" r="3" fill="none" stroke="#555" stroke-width="1.2"/><circle cx="4.5" cy="4.5" r="1" fill="#555"/></svg>
<!-- handles -->
<div class="a" style="left:386px;top:330px;width:9px;height:9px;border-radius:50%;background:#000;border:1.2px solid #D0D0D0"></div>
<div class="a" style="left:538px;top:330px;width:9px;height:9px;border-radius:50%;background:#000;border:1.2px solid #D0D0D0"></div>
<div class="a" style="left:691px;top:330px;width:9px;height:9px;border-radius:50%;background:#000;border:1.2px solid #D0D0D0"></div>
<div class="a" style="left:386px;top:399px;width:9px;height:9px;border-radius:50%;background:#000;border:1.2px solid #D0D0D0"></div>
<div class="a" style="left:691px;top:399px;width:9px;height:9px;border-radius:50%;background:#000;border:1.2px solid #D0D0D0"></div>
<div class="a" style="left:386px;top:469px;width:9px;height:9px;border-radius:50%;background:#000;border:1.2px solid #D0D0D0"></div>
<div class="a" style="left:538px;top:469px;width:9px;height:9px;border-radius:50%;background:#000;border:1.2px solid #D0D0D0"></div>
<div class="a" style="left:691px;top:469px;width:9px;height:9px;border-radius:50%;background:#000;border:1.2px solid #D0D0D0"></div>
</div></div>
<!-- vertical scrollbar canvas -->
<div class="a" style="left:922px;top:146px;width:17px;height:411px;background:linear-gradient(90deg,#F3F1E8,#FEFEFA)"></div>
<div class="a sbtn" style="left:923px;top:148px;width:15px;height:15px"></div>
<svg class="a" style="left:925px;top:152px" width="10" height="7"><path d="M1.5 5.5l3.5-3.5 3.5 3.5" stroke="#4D6185" stroke-width="2" fill="none"/></svg>
<div class="a sthumb" style="left:923px;top:189px;width:15px;height:112px"></div>
<svg class="a" style="left:927px;top:240px" width="8" height="7"><path d="M0 .5h7M0 2.5h7M0 4.5h7M0 6.5h7" stroke="#EEF4FE"/><path d="M1 1.5h7M1 3.5h7M1 5.5h7" stroke="#8CA4D8"/></svg>
<div class="a sbtn" style="left:923px;top:540px;width:15px;height:15px"></div>
<svg class="a" style="left:925px;top:544px" width="10" height="7"><path d="M1.5 1.5l3.5 3.5 3.5-3.5" stroke="#4D6185" stroke-width="2" fill="none"/></svg>
<!-- horizontal scrollbar canvas -->
<div class="a" style="left:244px;top:557px;width:16px;height:18px;background:#C0C0C0"></div>
<div class="a" style="left:260px;top:557px;width:662px;height:18px;background:linear-gradient(#F3F1E8,#FEFEFA)"></div>
<div class="a" style="left:922px;top:557px;width:17px;height:18px;background:#ECE9D8"></div>
<div class="a sbtn" style="left:261px;top:559px;width:15px;height:15px"></div>
<svg class="a" style="left:264px;top:561px" width="8" height="10"><path d="M5.5 1.5l-3.5 3.5 3.5 3.5" stroke="#4D6185" stroke-width="2" fill="none"/></svg>
<div class="a sthumb2" style="left:311px;top:559px;width:519px;height:15px"></div>
<svg class="a" style="left:567px;top:563px" width="8" height="7"><path d="M.5 0v7M2.5 0v7M4.5 0v7M6.5 0v7" stroke="#EEF4FE"/><path d="M1.5 1v7M3.5 1v7M5.5 1v7" stroke="#8CA4D8"/></svg>
<div class="a sbtn" style="left:906px;top:559px;width:15px;height:15px"></div>
<svg class="a" style="left:910px;top:561px" width="8" height="10"><path d="M2.5 1.5l3.5 3.5-3.5 3.5" stroke="#4D6185" stroke-width="2" fill="none"/></svg>
<!-- design bar -->
<div class="a" style="left:244px;top:575px;width:695px;height:1px;background:#666"></div>
<div class="a" style="left:244px;top:576px;width:695px;height:22px;background:#F0F0F0"></div>
<div class="t" style="left:248px;top:582px">Design</div>
<div class="a" style="left:283px;top:580px;width:83px;height:18px;border:1px solid #C8C4B0;border-bottom:none;border-radius:2px 2px 0 0;background:#F4F4F0"></div>
<div class="t" style="left:287px;top:582px">Navigation Map</div>
<div class="a" style="left:369px;top:576px;width:1px;height:22px;background:#C8C4B0"></div><div class="a" style="left:244px;top:577px;width:125px;height:1px;background:#fff"></div>
<div class="a" style="left:625px;top:580px;width:36px;height:16px;background:#fff;border:1px solid #7F9DB9"></div>
<div class="t" style="left:631px;top:582px">1024</div>
<div class="t" style="left:664px;top:581px;font-size:10px">x</div>
<div class="a" style="left:674px;top:580px;width:36px;height:16px;background:#fff;border:1px solid #7F9DB9"></div>
<div class="t" style="left:679px;top:582px">1768</div>
<div class="t" style="left:730px;top:580px">Zoom:</div>
<div class="a" style="left:764px;top:579px;width:64px;height:18px;background:#fff;border:1px solid #7F9DB9"></div>
<div class="t" style="left:768px;top:582px">75%</div>
<div class="a" style="left:811px;top:580px;width:16px;height:16px;background:linear-gradient(#C6D6FC,#A8C0F4);border:1px solid #B8CCF8;border-radius:2px"></div>
<svg class="a" style="left:814px;top:585px" width="10" height="6"><path d="M1 1l4 4 4-4z" fill="#4D6185"/></svg>
<div class="a yb" style="left:850px;top:578px"></div><div class="a yb" style="left:873px;top:578px"></div><div class="a yb" style="left:896px;top:578px"></div><div class="a yb" style="left:919px;top:578px;width:20px"></div>
<svg class="a" style="left:850px;top:578px" width="90" height="18">
<circle cx="9.5" cy="9" r="4" fill="#fff" stroke="#555" stroke-width="1.3"/><circle cx="9.5" cy="9" r="1.3" fill="#555"/>
<ellipse cx="31.5" cy="9" rx="6" ry="3.5" fill="#ddd" stroke="#333"/><circle cx="31.5" cy="9" r="2" fill="#333"/><path d="M25 3l13 12" stroke="#D00000" stroke-width="2"/>
<path d="M50 13v-6l2-2 1 2 1-3 1 3 1-2v8h-6z" fill="#fff" stroke="#333"/>
<path d="M71 5.5h10v6h-6l-3 3v-3h-1z" fill="#fff" stroke="#333"/>
</svg>

<!-- PROPERTIES -->
<div class="a" style="left:244px;top:607px;width:695px;height:196px;background:#5B5B5B"></div>
<div class="a" style="left:246px;top:626px;width:691px;height:175px;background:#F0F0F0"></div>
<div class="a" style="left:246px;top:609px;width:56px;height:18px;background:#F0F0F0;border-radius:3px 0 0 0"></div>
<div class="t" style="left:249px;top:612px">Properties</div>
<div class="t w" style="left:306px;top:612px">Events</div>
<div class="a" style="left:343px;top:609px;width:1px;height:17px;background:#B8B4A0"></div>
<div class="t w" style="left:347px;top:612px">Comments</div>
<div class="a" style="left:401px;top:609px;width:1px;height:17px;background:#B8B4A0"></div>
<div class="t w" style="left:405px;top:612px">Requirements</div>
<div class="a" style="left:472px;top:609px;width:1px;height:17px;background:#B8B4A0"></div>
<!-- side icons -->
<svg class="a" style="left:255px;top:636px" width="22" height="48">
<rect x="0" y="0" width="20" height="20" fill="#E8E6D8"/><rect x="4.5" y="3.5" width="12" height="11" fill="#fff" stroke="#3A6AB0"/><rect x="8" y="5" width="3" height="3" fill="#E04040"/><path d="M7 11l3-2 2 2" fill="#E0A020"/><path d="M14 7l-4 3 4 3" stroke="#40A040" fill="none"/><path d="M20 14v6h-6z" fill="#2A6AB0"/>
<rect x="0" y="26" width="20" height="20" fill="#E8E6D8"/><rect x="4.5" y="28.5" width="12" height="11" fill="#fff" stroke="#3A6AB0"/><rect x="8" y="30" width="3" height="3" fill="#E04040"/><path d="M7 36l3-2 2 2" fill="#E0A020"/><path d="M14 32l-4 3 4 3" stroke="#40A040" fill="none"/><path d="M0 40v6h6z" fill="#2A6AB0"/>
</svg>
<div class="a" style="left:285px;top:634px;width:1px;height:156px;background:#555"></div>
<!-- rich text group -->
<div class="a gb" style="left:295px;top:644px;width:134px;height:118px"></div>
<div class="t gt" style="left:300px;top:638px">Rich Text properties</div>
<div class="t" style="left:304px;top:659px">Size (px)</div>
<svg class="a" style="left:305px;top:680px" width="16" height="36"><path d="M2 5h12" stroke="#000" stroke-width="1.6"/><path d="M0 5l4-3.5v7zM16 5l-4-3.5v7z" fill="#000"/><path d="M8 21v14" stroke="#000" stroke-width="1.6"/><path d="M8 19l-3.5 4h7zM8 37l-3.5-4h7z" fill="#000"/></svg>
<div class="a inp" style="left:326px;top:676px;width:92px;height:19px"></div>
<div class="t" style="left:332px;top:679px">406</div>
<div class="a inp" style="left:326px;top:700px;width:92px;height:19px"></div>
<div class="t" style="left:332px;top:703px">185</div>
<div class="a" style="left:305px;top:730px;width:13px;height:13px;border:1px solid #1C5180;background:linear-gradient(135deg,#DCDCD4,#fff)"></div>
<div class="t" style="left:320px;top:731px">Hidden</div>
<!-- text style group -->
<div class="a gb" style="left:433px;top:644px;width:254px;height:118px"></div>
<div class="t gt" style="left:439px;top:638px">Text Style</div>
<div class="a inp" style="left:451px;top:666px;width:168px;height:21px"></div>
<div class="t" style="left:455px;top:670px">Arial</div>
<div class="a" style="left:601px;top:667px;width:17px;height:19px;background:linear-gradient(#C6D6FC,#A8C0F4);border:1px solid #B8CCF8;border-radius:2px"></div>
<svg class="a" style="left:604px;top:672px" width="11" height="8"><path d="M1.5 1.5l4 4 4-4" stroke="#4D6185" stroke-width="2" fill="none"/></svg>
<div class="a inp" style="left:624px;top:666px;width:44px;height:21px"></div>
<div class="t" style="left:629px;top:670px">10</div>
<div class="a" style="left:650px;top:667px;width:17px;height:19px;background:linear-gradient(#C6D6FC,#A8C0F4);border:1px solid #B8CCF8;border-radius:2px"></div>
<svg class="a" style="left:653px;top:672px" width="11" height="8"><path d="M1.5 1.5l4 4 4-4" stroke="#4D6185" stroke-width="2" fill="none"/></svg>
<svg class="a" style="left:450px;top:693px" width="240" height="50" viewBox="450 693 240 50">
<text x="457" y="710" font-family="Liberation Serif" font-weight="700" font-size="14" fill="#2C5490">B</text>
<text x="481" y="710" font-family="Liberation Serif" font-style="italic" font-size="14" fill="#2C5490">I</text>
<text x="502" y="709" font-family="Liberation Serif" font-weight="700" font-size="13" fill="#2C5490">U</text><rect x="502" y="711" width="11" height="1.3" fill="#2C5490"/>
<text x="525" y="710" font-family="Liberation Serif" font-weight="700" font-size="13" fill="#2C5490">T</text><rect x="523" y="703.5" width="14" height="1.4" fill="#2C5490"/>
<text x="549" y="707" font-family="Liberation Serif" font-weight="700" font-size="11" fill="#2C5490">A</text><rect x="548" y="708" width="12" height="3" fill="#fff"/>
<path d="M567 703h5l-2.5 3z" fill="#222"/>
<rect x="451.5" y="719.5" width="22" height="22" rx="3" fill="#fff" stroke="#7A9AC0"/>
<rect x="525.5" y="719.5" width="22" height="22" rx="3" fill="#fff" stroke="#7A9AC0"/>
<g stroke="#50607A" stroke-width="1.2">
<path d="M455 724h16M455 727h10M455 730h16M455 733h10M455 736h10"/>
<path d="M477 724h16M480 727h10M477 730h16M480 733h10M479 736h12"/>
<path d="M500 724h16M506 727h10M500 730h16M506 733h10M504 736h12"/>
</g>
<g stroke="#50607A" fill="none"><rect x="529.5" y="722.5" width="14" height="15"/><rect x="551.5" y="722.5" width="15" height="15"/><rect x="574.5" y="722.5" width="15" height="15"/></g>
<g stroke="#50607A"><path d="M532 725.5h9M532 728.5h9M532 731.5h9"/><path d="M554 726.5h10M554 729.5h10M554 732.5h10"/><path d="M577 730.5h10M577 733.5h10M577 735.5h10"/></g>
</svg>
<!-- background group -->
<div class="a gb" style="left:690px;top:644px;width:176px;height:118px"></div>
<div class="t gt" style="left:697px;top:638px">Background</div>
<svg class="a" style="left:705px;top:666px" width="30" height="16"><path d="M3 7l5-5 6 6-5 5z" fill="#C8D4E8" stroke="#4A5A7A"/><path d="M13 8c2 2 2 4 1 6" stroke="#2A70D0" stroke-width="2" fill="none"/><path d="M21 7h6l-3 3z" fill="#222"/></svg>
<div class="a inp" style="left:753px;top:666px;width:55px;height:18px"></div>
<div class="t" style="left:766px;top:668px">------</div>
<div class="t" style="left:700px;top:691px">Image:</div>
<div class="a" style="left:701px;top:709px;width:105px;height:17px;background:#ECE9D8;border:1px solid #A5ACB2"></div>
<div class="a" style="left:812px;top:709px;width:18px;height:18px;border:1px solid #25456A;border-radius:3px;background:linear-gradient(#fff,#E8E8E0)"></div>
<div class="t" style="left:816px;top:712px">...</div>
<div class="a" style="left:835px;top:709px;width:18px;height:18px;border:1px solid #25456A;border-radius:3px;background:linear-gradient(#fff,#E8E8E0)"></div>
<svg class="a" style="left:838px;top:711px" width="12" height="14"><path d="M1 3h10M4 3V1h4v2" stroke="#333" fill="none"/><path d="M2.5 4.5h7v8h-7z" fill="none" stroke="#333"/><path d="M4.5 6v5M6 6v5M7.5 6v5" stroke="#333"/></svg>
<div class="a" style="left:701px;top:729px;width:13px;height:13px;border:1px solid #1C5180;background:linear-gradient(135deg,#DCDCD4,#fff)"></div>
<div class="t" style="left:716px;top:730px">RepeatX</div>
<div class="a" style="left:781px;top:729px;width:13px;height:13px;border:1px solid #1C5180;background:linear-gradient(135deg,#DCDCD4,#fff)"></div>
<div class="t" style="left:796px;top:730px">RepeatY</div>
<!-- border group -->
<div class="a" style="left:295px;top:773px;width:364px;height:20px;border:1px solid #D0D0BF;border-radius:4px 4px 0 0;border-bottom:none"></div>
<div class="a" style="left:286px;top:793px;width:640px;height:8px;background:#F0F0F0"></div>
<div class="t gt" style="left:300px;top:767px">Border</div>
<div class="a" style="left:300px;top:786px;width:600px;height:7px;overflow:hidden">
<div class="t" style="left:4px;top:0">Style</div><div class="t" style="left:118px;top:0">Width (px)</div><div class="t" style="left:202px;top:0">Color</div>
<div class="a" style="left:292px;top:6px;width:42px;height:4px;border:1px solid #7F9DB9"></div>
</div>
<!-- props scrollbar -->
<div class="a" style="left:909px;top:634px;width:16px;height:160px;background:linear-gradient(90deg,#F3F1E8,#FEFEFA)"></div>
<div class="a sbtn" style="left:909px;top:634px;width:16px;height:16px"></div>
<svg class="a" style="left:912px;top:639px" width="10" height="7"><path d="M1.5 5.5l3.5-3.5 3.5 3.5" stroke="#4D6185" stroke-width="2" fill="none"/></svg>
<div class="a sthumb" style="left:909px;top:652px;width:16px;height:66px"></div>
<svg class="a" style="left:913px;top:682px" width="8" height="7"><path d="M0 .5h7M0 2.5h7M0 4.5h7M0 6.5h7" stroke="#EEF4FE"/><path d="M1 1.5h7M1 3.5h7M1 5.5h7" stroke="#8CA4D8"/></svg>
<div class="a sbtn" style="left:909px;top:778px;width:16px;height:16px"></div>
<svg class="a" style="left:912px;top:783px" width="10" height="7"><path d="M1.5 1.5l3.5 3.5 3.5-3.5" stroke="#4D6185" stroke-width="2" fill="none"/></svg>

<!-- TOOLTIP -->
<div class="a" style="left:600px;top:412px;width:113px;height:17px;background:#FFFFE1;border:1px solid #000"></div>
<div class="t" style="left:560px;top:414px;width:152px;text-align:right;font-size:11px">drag-and-drop to a screen</div>
<!-- CONTEXT MENU -->
<div class="a" style="left:476px;top:390px;width:152px;height:286px;background:rgba(0,0,0,0.18);filter:blur(1.5px)"></div>
<div class="a" style="left:473px;top:387px;width:153px;height:286px;background:#fff;border:1px solid #ACA899"></div>
<div class="t mi" style="top:394px">Copy</div>
<div class="t mi" style="top:414px">Cut</div>
<div class="t mi" style="top:434px">Paste</div>
<div class="t mi" style="top:456px">New Requirement</div>
<div class="t mi" style="top:480px">New Comment</div>
<div class="t mi" style="top:501px">Add to "My Widgets"</div>
<div class="t mi" style="top:519px">Order</div>
<div class="t mi" style="top:538px">Group into form</div>
<div class="t mi" style="top:558px">Delete</div>
<div class="a" style="left:477px;top:577px;width:145px;height:1px;background:#ACA899"></div>
<div class="t mi" style="top:585px">Add Event</div>
<div class="t mi" style="top:604px">Add Link</div>
<div class="t mi" style="top:626px;color:#ACA899">Remove Event</div>
<div class="a" style="left:477px;top:647px;width:145px;height:1px;background:#ACA899"></div>
<div class="t mi" style="top:656px">Save as image</div>
<svg class="a" style="left:473px;top:387px" width="153" height="286" viewBox="473 387 153 286">
<!-- copy -->
<path d="M479.5 393.5h7l2 2v10h-9z" fill="#F4F0E0" stroke="#A89870"/><path d="M484.5 396.5h7l2 2v9h-9z" fill="#fff" stroke="#A89870"/><path d="M486 399.5h6M486 401.5h6M486 403.5h6M486 405.5h6M481 396.5h3M481 398.5h3M481 400.5h3" stroke="#5A7AB8"/>
<!-- cut -->
<path d="M492 414l-6 9M489 414l-1 11" stroke="#3A5A98" stroke-width="1.2"/><circle cx="481.5" cy="422" r="2" fill="none" stroke="#3A70C0" stroke-width="1.3"/><circle cx="487.5" cy="427" r="2" fill="none" stroke="#3A70C0" stroke-width="1.3"/><path d="M483.5 422h8" stroke="#3A5A98"/>
<!-- paste -->
<rect x="480.5" y="435.5" width="10" height="12" rx="1" fill="#F2C880" stroke="#B88A40"/><rect x="483" y="433" width="5" height="3" fill="#8A8A8A"/><path d="M485.5 438.5h6l2 2v7h-8z" fill="#fff" stroke="#7A8AB0"/><path d="M487 442.5h5M487 444.5h5M487 446.5h5" stroke="#5A7AB8"/>
<!-- requirement -->
<path d="M481 462c0-3 2-4 4-4h6c2 0 3 2 3 4v3h-13z" fill="#E8E8E8" stroke="#555"/><path d="M484 458v-3M486.5 458v-4M489 458v-4M491.5 458v-3" stroke="#555"/><path d="M481 466c2 2 6 2 8 0" stroke="#555" fill="none"/>
<path d="M494 464v8M490 468h8" stroke="#3A9A30" stroke-width="2.5"/><path d="M494 465v6M491 468h6" stroke="#A8D848" stroke-width="1.2"/>
<!-- comment -->
<path d="M480.5 479.5h13v8h-8l-3 3v-3h-2z" fill="#F0F0F0" stroke="#777"/>
<path d="M494 488v8M490 492h8" stroke="#3A9A30" stroke-width="2.5"/><path d="M494 489v6M491 492h6" stroke="#A8D848" stroke-width="1.2"/>
<!-- order arrow -->
<path d="M613 521v7l3.5-3.5z" fill="#000"/>
<!-- group into form -->
<rect x="480.5" y="538.5" width="8" height="8" fill="none" stroke="#E02020"/><rect x="484.5" y="542.5" width="8" height="8" fill="none" stroke="#E02020"/><path d="M486 544h5M486 547h5" stroke="#E02020"/>
<g fill="#000"><rect x="478" y="536" width="3" height="3"/><rect x="491" y="536" width="3" height="3"/><rect x="478" y="549" width="3" height="3"/><rect x="491" y="549" width="3" height="3"/></g>
<!-- delete -->
<path d="M481 558l10 10M491 558l-10 10" stroke="#C02020" stroke-width="4"/><path d="M481 558l10 10M491 558l-10 10" stroke="#F06060" stroke-width="2"/>
<!-- add event -->
<circle cx="484.5" cy="591" r="3.3" fill="none" stroke="#666" stroke-width="1.3" stroke-dasharray="2 1"/><circle cx="484.5" cy="591" r="1.2" fill="#666"/>
<!-- add link -->
<path d="M476 606h3M476 609h3M476 612h3" stroke="#555"/><circle cx="485" cy="609" r="3.3" fill="none" stroke="#666" stroke-width="1.3" stroke-dasharray="2 1"/><circle cx="485" cy="609" r="1.2" fill="#666"/>
<!-- remove event -->
<circle cx="483" cy="628" r="3.3" fill="none" stroke="#B8B4A0" stroke-width="1.3" stroke-dasharray="2 1"/><circle cx="483" cy="628" r="1.2" fill="#B8B4A0"/><path d="M487 634l4 4M491 634l-4 4" stroke="#B8B4A0" stroke-width="1.5"/>
</svg>

<!-- RIGHT PANEL -->
<div class="a" style="left:947px;top:105px;width:200px;height:698px;background:#5B5B5B"></div>
<svg class="a" style="left:956px;top:110px" width="5" height="11"><g fill="#8A8A8A"><rect x="0" y="0" width="1" height="1"/><rect x="2" y="0" width="1" height="1"/><rect x="0" y="2" width="1" height="1"/><rect x="2" y="2" width="1" height="1"/><rect x="0" y="4" width="1" height="1"/><rect x="2" y="4" width="1" height="1"/><rect x="0" y="6" width="1" height="1"/><rect x="2" y="6" width="1" height="1"/><rect x="0" y="8" width="1" height="1"/><rect x="2" y="8" width="1" height="1"/></g></svg>
<div class="t w" style="left:965px;top:109px">Screens</div>
<div class="a" style="left:949px;top:125px;width:196px;height:440px;background:#F0F0F0"></div>
<svg class="a" style="left:952px;top:128px" width="120" height="16">
<path d="M7.5 2v12M1.5 8h12" stroke="#3A8A30" stroke-width="4"/><path d="M7.5 2.5v11M2 8h11" stroke="#B8D848" stroke-width="2.5"/>
<path d="M23 5.5v7h14v-7" stroke="#5A80C0" stroke-width="2" fill="none"/><path d="M26 2l6 6M32 4v4h-4" stroke="#2060B0" stroke-width="1.3" fill="none"/>
<path d="M46 5.5v7h14v-7" stroke="#5A80C0" stroke-width="2" fill="none"/><path d="M50 11l8-7M54 4h4v4" stroke="#2060B0" stroke-width="1.3" fill="none"/>
<rect x="69" y="0" width="1" height="16" fill="#C8C4B0"/>
<rect x="77" y="0" width="16" height="16" fill="#FFCC33"/><rect x="81.5" y="1.5" width="6" height="3" rx="0.5" fill="#fff" stroke="#333"/><rect x="81.5" y="6.5" width="6" height="3" rx="0.5" fill="#fff" stroke="#333"/><rect x="81.5" y="11.5" width="6" height="3" rx="0.5" fill="#fff" stroke="#333"/>
<g fill="none" stroke="#999"><path d="M105 1.5l1.5 1.5-1.5 1.5-1.5-1.5z"/><path d="M105 5.5l1.5 1.5-1.5 1.5-1.5-1.5z"/><path d="M105 9.5l1.5 1.5-1.5 1.5-1.5-1.5z"/></g><path d="M108 3h4M108 7h4M108 11h4" stroke="#aaa"/>
</svg>
<div class="a" style="left:949px;top:146px;width:196px;height:1px;background:#000"></div>
<div class="a" style="left:951px;top:279px;width:175px;height:127px;border:3px solid #C4C4C4"></div>

<svg class="a" style="left:959px;top:158px" width="22" height="8"><rect x="0.5" y="1.5" width="5" height="5" fill="#fff" stroke="#333"/><rect x="15.5" y="1.5" width="5" height="5" fill="#fff" stroke="#333"/><path d="M6 4h9" stroke="#777"/></svg>
<svg class="a" style="left:988px;top:155px" width="101" height="100"><rect x="0.5" y="0.5" width="100" height="99" fill="#C0C0C0" stroke="#000"/><rect x="1" y="1" width="99" height="75" fill="#1A1A1A"/><rect x="1" y="1" width="99" height="12" fill="#2E2E2E"/><path d="M6 10l8-6M8 11l10-7" stroke="#E8E8E8" stroke-width="1.5"/><path d="M5 9l3 3" stroke="#F08040" stroke-width="2"/><rect x="21.5" y="3.5" width="27" height="7" fill="none" stroke="#70C050"/><path d="M24 6h8M30 8h10" stroke="#ccc"/><rect x="34" y="7" width="2" height="2" fill="#F90"/><path d="M78 5c2 2 4 4 2 8" stroke="#E05A20" stroke-width="3"/><rect x="1" y="11" width="99" height="1" fill="#FF9900"/><rect x="76" y="14" width="22" height="3" fill="#E8E8E8"/><path d="M4 18v52h10" stroke="#555" stroke-dasharray="2 2" fill="none"/><path d="M18 76V17h82" stroke="#FF9900" stroke-width="1.3" fill="none"/><path d="M18 75h82" stroke="#FF9900" stroke-width="1"/><g fill="#F89830"><rect x="4" y="18" width="13" height="2"/><rect x="4" y="22" width="13" height="2"/><rect x="4" y="26" width="13" height="2"/><rect x="4" y="30" width="13" height="2"/></g><path d="M1 2l4 0-4 4z" fill="#E040A0"/><path d="M96 2h4v4z" fill="#E040A0"/><path d="M2 72l3 3h-3z" fill="#E0E0E0"/><g fill="#fff"><circle cx="50" cy="77" r="0.7"/><circle cx="57" cy="77" r="0.7"/><circle cx="64" cy="77" r="0.7"/></g><rect x="21" y="22" width="12" height="2" fill="#FF40A0"/><rect x="21" y="28" width="30" height="1.2" fill="#D8449A" opacity="0.75"/><rect x="21" y="31" width="30" height="1.2" fill="#D8449A" opacity="0.75"/><rect x="21" y="34" width="30" height="1.2" fill="#D8449A" opacity="0.75"/><rect x="21" y="37" width="30" height="1.2" fill="#D8449A" opacity="0.75"/><rect x="21" y="40" width="30" height="1.2" fill="#D8449A" opacity="0.75"/><rect x="21" y="43" width="30" height="1.2" fill="#D8449A" opacity="0.75"/><rect x="21" y="46" width="30" height="1.2" fill="#D8449A" opacity="0.75"/><rect x="21" y="49" width="30" height="1.2" fill="#D8449A" opacity="0.75"/><rect x="56" y="23" width="41" height="26" fill="#fff" stroke="#FF9900" stroke-width="1.3"/><rect x="58" y="25" width="5" height="3" fill="#555"/><rect x="66" y="25" width="5" height="3" fill="#555"/><rect x="74" y="25" width="5" height="3" fill="#555"/><rect x="82" y="25" width="5" height="3" fill="#555"/><rect x="90" y="25" width="5" height="3" fill="#555"/><rect x="58" y="31" width="5" height="3" fill="#555"/><rect x="66" y="31" width="5" height="3" fill="#555"/><rect x="74" y="31" width="5" height="3" fill="#555"/><rect x="82" y="31" width="5" height="3" fill="#555"/><rect x="90" y="31" width="5" height="3" fill="#555"/><rect x="58" y="37" width="5" height="3" fill="#555"/><rect x="66" y="37" width="5" height="3" fill="#555"/><rect x="74" y="37" width="5" height="3" fill="#555"/><rect x="82" y="37" width="5" height="3" fill="#555"/><rect x="90" y="37" width="5" height="3" fill="#555"/><rect x="58" y="43" width="5" height="3" fill="#555"/><rect x="66" y="43" width="5" height="3" fill="#555"/><rect x="74" y="43" width="5" height="3" fill="#555"/><rect x="82" y="43" width="5" height="3" fill="#555"/><rect x="90" y="43" width="5" height="3" fill="#555"/><rect x="21" y="53" width="76" height="1.2" fill="#D8449A" opacity="0.75"/><rect x="21" y="57" width="76" height="1.2" fill="#D8449A" opacity="0.75"/><rect x="21" y="60" width="76" height="1.2" fill="#D8449A" opacity="0.75"/><rect x="21" y="64" width="76" height="1.2" fill="#D8449A" opacity="0.75"/><rect x="21" y="67" width="76" height="1.2" fill="#D8449A" opacity="0.75"/></svg>
<div class="t" style="left:988px;top:261px;width:100px;text-align:center">ABOUT</div>
<svg class="a" style="left:959px;top:286px" width="22" height="8"><rect x="0.5" y="1.5" width="5" height="5" fill="#fff" stroke="#333"/><rect x="15.5" y="1.5" width="5" height="5" fill="#fff" stroke="#333"/><path d="M6 4h9" stroke="#777"/></svg>
<svg class="a" style="left:988px;top:283px" width="101" height="100"><rect x="0.5" y="0.5" width="100" height="99" fill="#C0C0C0" stroke="#000"/><rect x="1" y="1" width="99" height="75" fill="#1A1A1A"/><rect x="1" y="1" width="99" height="12" fill="#2E2E2E"/><path d="M6 10l8-6M8 11l10-7" stroke="#E8E8E8" stroke-width="1.5"/><path d="M5 9l3 3" stroke="#F08040" stroke-width="2"/><rect x="21.5" y="3.5" width="27" height="7" fill="none" stroke="#70C050"/><path d="M24 6h8M30 8h10" stroke="#ccc"/><rect x="34" y="7" width="2" height="2" fill="#F90"/><path d="M78 5c2 2 4 4 2 8" stroke="#E05A20" stroke-width="3"/><rect x="1" y="11" width="99" height="1" fill="#FF9900"/><rect x="76" y="14" width="22" height="3" fill="#E8E8E8"/><path d="M4 18v52h10" stroke="#555" stroke-dasharray="2 2" fill="none"/><path d="M18 76V17h82" stroke="#FF9900" stroke-width="1.3" fill="none"/><path d="M18 75h82" stroke="#FF9900" stroke-width="1"/><g fill="#F89830"><rect x="4" y="18" width="13" height="2"/><rect x="4" y="22" width="13" height="2"/><rect x="4" y="26" width="13" height="2"/><rect x="4" y="30" width="13" height="2"/></g><path d="M1 2l4 0-4 4z" fill="#E040A0"/><path d="M96 2h4v4z" fill="#E040A0"/><path d="M2 72l3 3h-3z" fill="#E0E0E0"/><g fill="#fff"><circle cx="50" cy="77" r="0.7"/><circle cx="57" cy="77" r="0.7"/><circle cx="64" cy="77" r="0.7"/></g><rect x="21" y="23" width="10" height="2" fill="#FF40A0"/><rect x="21" y="27" width="18" height="1.5" fill="#FF40A0"/><rect x="21" y="30" width="18" height="1.5" fill="#FF40A0"/><rect x="21" y="33" width="18" height="1.5" fill="#FF40A0"/><rect x="21" y="41" width="40" height="1.2" fill="#D8449A" opacity="0.75"/><rect x="21" y="44" width="40" height="1.2" fill="#D8449A" opacity="0.75"/><rect x="21" y="48" width="40" height="1.2" fill="#D8449A" opacity="0.75"/><rect x="21" y="51" width="40" height="1.2" fill="#D8449A" opacity="0.75"/><rect x="21" y="54" width="40" height="1.2" fill="#D8449A" opacity="0.75"/><rect x="61" y="23" width="34" height="31" fill="#BEBEBE"/><text x="78" y="31" text-anchor="middle" font-size="6" font-weight="700" font-family="Liberation Sans" fill="#111">Browser</text><text x="78" y="39" text-anchor="middle" font-size="6" font-weight="700" font-family="Liberation Sans" fill="#111">(html)</text><rect x="22" y="58" width="57" height="13" rx="1" fill="#FF9020"/><rect x="25" y="64" width="44" height="7" fill="#fff"/><rect x="70" y="64" width="6" height="7" fill="#fff"/></svg>
<div class="t" style="left:988px;top:389px;width:100px;text-align:center">CONTACT</div>
<svg class="a" style="left:964px;top:414px" width="12" height="8"><path d="M0 4h2M3 4h7" stroke="#333"/><path d="M7 1.5l3 2.5-3 2.5" fill="none" stroke="#333"/></svg>
<svg class="a" style="left:988px;top:411px" width="101" height="100"><rect x="0.5" y="0.5" width="100" height="99" fill="#C0C0C0" stroke="#000"/><rect x="1" y="1" width="99" height="75" fill="#1A1A1A"/><rect x="1" y="1" width="99" height="12" fill="#2E2E2E"/><path d="M6 10l8-6M8 11l10-7" stroke="#E8E8E8" stroke-width="1.5"/><path d="M5 9l3 3" stroke="#F08040" stroke-width="2"/><rect x="21.5" y="3.5" width="27" height="7" fill="none" stroke="#70C050"/><path d="M24 6h8M30 8h10" stroke="#ccc"/><rect x="34" y="7" width="2" height="2" fill="#F90"/><path d="M78 5c2 2 4 4 2 8" stroke="#E05A20" stroke-width="3"/><rect x="1" y="11" width="99" height="1" fill="#FF9900"/><rect x="76" y="14" width="22" height="3" fill="#E8E8E8"/><path d="M4 18v52h10" stroke="#555" stroke-dasharray="2 2" fill="none"/><path d="M18 76V17h82" stroke="#FF9900" stroke-width="1.3" fill="none"/><path d="M18 75h82" stroke="#FF9900" stroke-width="1"/><g fill="#F89830"><rect x="4" y="18" width="13" height="2"/><rect x="4" y="22" width="13" height="2"/><rect x="4" y="26" width="13" height="2"/><rect x="4" y="30" width="13" height="2"/></g><path d="M1 2l4 0-4 4z" fill="#E040A0"/><path d="M96 2h4v4z" fill="#E040A0"/><path d="M2 72l3 3h-3z" fill="#E0E0E0"/><g fill="#fff"><circle cx="50" cy="77" r="0.7"/><circle cx="57" cy="77" r="0.7"/><circle cx="64" cy="77" r="0.7"/></g><rect x="21" y="20" width="45" height="2" fill="#FF40A0"/><rect x="21" y="25" width="76" height="1.2" fill="#D8449A" opacity="0.75"/><rect x="21" y="28" width="76" height="1.2" fill="#D8449A" opacity="0.75"/><rect x="21" y="31" width="76" height="1.2" fill="#D8449A" opacity="0.75"/><rect x="21" y="35" width="76" height="1.2" fill="#D8449A" opacity="0.75"/><rect x="21" y="39" width="76" height="1.2" fill="#D8449A" opacity="0.75"/><path d="M34 48c4-4 8 0 7 6l-1 14h-4z" fill="#E08050"/><circle cx="35" cy="47" r="3" fill="#2A70C0"/><path d="M36 54l6 4" stroke="#fff" stroke-width="2"/><rect x="55" y="45" width="42" height="1.2" fill="#D8449A" opacity="0.75"/><rect x="55" y="48" width="42" height="1.2" fill="#D8449A" opacity="0.75"/><rect x="55" y="51" width="42" height="1.2" fill="#D8449A" opacity="0.75"/><rect x="55" y="55" width="42" height="1.2" fill="#D8449A" opacity="0.75"/><rect x="55" y="58" width="42" height="1.2" fill="#D8449A" opacity="0.75"/><rect x="55" y="61" width="42" height="1.2" fill="#D8449A" opacity="0.75"/><rect x="55" y="64" width="42" height="1.2" fill="#D8449A" opacity="0.75"/></svg>
<div class="t" style="left:988px;top:516px;width:100px;text-align:center">HOME</div>
<svg class="a" style="left:959px;top:542px" width="22" height="8"><rect x="0.5" y="1.5" width="5" height="5" fill="#fff" stroke="#333"/><rect x="15.5" y="1.5" width="5" height="5" fill="#fff" stroke="#333"/><path d="M6 4h9" stroke="#777"/></svg>
<svg class="a" style="left:988px;top:539px" width="101" height="26"><rect x="0.5" y="0.5" width="100" height="99" fill="#C0C0C0" stroke="#000"/><rect x="1" y="1" width="99" height="75" fill="#1A1A1A"/><rect x="1" y="1" width="99" height="12" fill="#2E2E2E"/><path d="M6 10l8-6M8 11l10-7" stroke="#E8E8E8" stroke-width="1.5"/><path d="M5 9l3 3" stroke="#F08040" stroke-width="2"/><rect x="21.5" y="3.5" width="27" height="7" fill="none" stroke="#70C050"/><path d="M24 6h8M30 8h10" stroke="#ccc"/><rect x="34" y="7" width="2" height="2" fill="#F90"/><path d="M78 5c2 2 4 4 2 8" stroke="#E05A20" stroke-width="3"/><rect x="1" y="11" width="99" height="1" fill="#FF9900"/><rect x="76" y="14" width="22" height="3" fill="#E8E8E8"/><path d="M4 18v52h10" stroke="#555" stroke-dasharray="2 2" fill="none"/><path d="M18 76V17h82" stroke="#FF9900" stroke-width="1.3" fill="none"/><path d="M18 75h82" stroke="#FF9900" stroke-width="1"/><g fill="#F89830"><rect x="4" y="18" width="13" height="2"/><rect x="4" y="22" width="13" height="2"/><rect x="4" y="26" width="13" height="2"/><rect x="4" y="30" width="13" height="2"/></g><path d="M1 2l4 0-4 4z" fill="#E040A0"/><path d="M96 2h4v4z" fill="#E040A0"/><path d="M2 72l3 3h-3z" fill="#E0E0E0"/><g fill="#fff"><circle cx="50" cy="77" r="0.7"/><circle cx="57" cy="77" r="0.7"/><circle cx="64" cy="77" r="0.7"/></g><rect x="76" y="14" width="22" height="3" fill="#8A8AF0"/><rect x="21" y="21" width="14" height="2" fill="#FF40A0"/><rect x="21" y="25" width="76" height="6" fill="none" stroke="#333"/></svg>
<!-- screens scrollbar -->
<div class="a" style="left:1128px;top:148px;width:16px;height:417px;background:linear-gradient(90deg,#F3F1E8,#FEFEFA)"></div>
<div class="a sbtn" style="left:1129px;top:150px;width:15px;height:15px"></div>
<svg class="a" style="left:1131px;top:154px" width="10" height="7"><path d="M1.5 5.5l3.5-3.5 3.5 3.5" stroke="#4D6185" stroke-width="2" fill="none"/></svg>
<div class="a sthumb" style="left:1129px;top:167px;width:15px;height:172px"></div>
<svg class="a" style="left:1133px;top:250px" width="8" height="7"><path d="M0 .5h7M0 2.5h7M0 4.5h7M0 6.5h7" stroke="#EEF4FE"/><path d="M1 1.5h7M1 3.5h7M1 5.5h7" stroke="#8CA4D8"/></svg>
<div class="a sbtn" style="left:1129px;top:550px;width:15px;height:15px"></div>
<svg class="a" style="left:1131px;top:554px" width="10" height="7"><path d="M1.5 1.5l3.5 3.5 3.5-3.5" stroke="#4D6185" stroke-width="2" fill="none"/></svg>
<!-- notes -->
<svg class="a" style="left:956px;top:574px" width="5" height="11"><g fill="#8A8A8A"><rect x="0" y="0" width="1" height="1"/><rect x="2" y="0" width="1" height="1"/><rect x="0" y="2" width="1" height="1"/><rect x="2" y="2" width="1" height="1"/><rect x="0" y="4" width="1" height="1"/><rect x="2" y="4" width="1" height="1"/><rect x="0" y="6" width="1" height="1"/><rect x="2" y="6" width="1" height="1"/><rect x="0" y="8" width="1" height="1"/><rect x="2" y="8" width="1" height="1"/></g></svg>
<div class="t w" style="left:965px;top:574px">Notes</div>
<div class="a" style="left:949px;top:591px;width:196px;height:210px;background:#fff"></div>
<div class="a" style="left:1128px;top:591px;width:16px;height:210px;background:linear-gradient(90deg,#F3F1E8,#FEFEFA)"></div>
<div class="a" style="left:1129px;top:592px;width:15px;height:15px;border:1px solid #E8E8DC;border-radius:2px;background:#EEEDE5"></div>
<svg class="a" style="left:1131px;top:596px" width="10" height="7"><path d="M1.5 5.5l3.5-3.5 3.5 3.5" stroke="#C8C8C0" stroke-width="2" fill="none"/></svg>
<div class="a" style="left:1129px;top:784px;width:15px;height:15px;border:1px solid #E8E8DC;border-radius:2px;background:#EEEDE5"></div>
<svg class="a" style="left:1131px;top:788px" width="10" height="7"><path d="M1.5 1.5l3.5 3.5 3.5-3.5" stroke="#C8C8C0" stroke-width="2" fill="none"/></svg>
<!-- splitter handles -->
<div class="a" style="left:237px;top:455px;width:6px;height:49px;background:linear-gradient(90deg,#A8A8A8,#C4C4C4 50%,#B0B0B0);border-radius:2px"></div>
<svg class="a" style="left:238px;top:476px" width="5" height="8"><path d="M4 0v8L0 4z" fill="#fff"/></svg>
<div class="a" style="left:940px;top:455px;width:6px;height:49px;background:linear-gradient(90deg,#A8A8A8,#C4C4C4 50%,#B0B0B0);border-radius:2px"></div>
<svg class="a" style="left:941px;top:476px" width="5" height="8"><path d="M0 0v8l4-4z" fill="#fff"/></svg>
<!-- status grip -->



<!-- status bar -->
<div class="a" style="left:4px;top:806px;width:1150px;height:30px;background:#F0F0F0"></div>
<svg class="a" style="left:901px;top:812px" width="3" height="16"><g fill="#A0A0A0"><rect x="0" y="0" width="2" height="2"/><rect x="0" y="4" width="2" height="2"/><rect x="0" y="8" width="2" height="2"/><rect x="0" y="12" width="2" height="2"/></g></svg>
</body></html>
